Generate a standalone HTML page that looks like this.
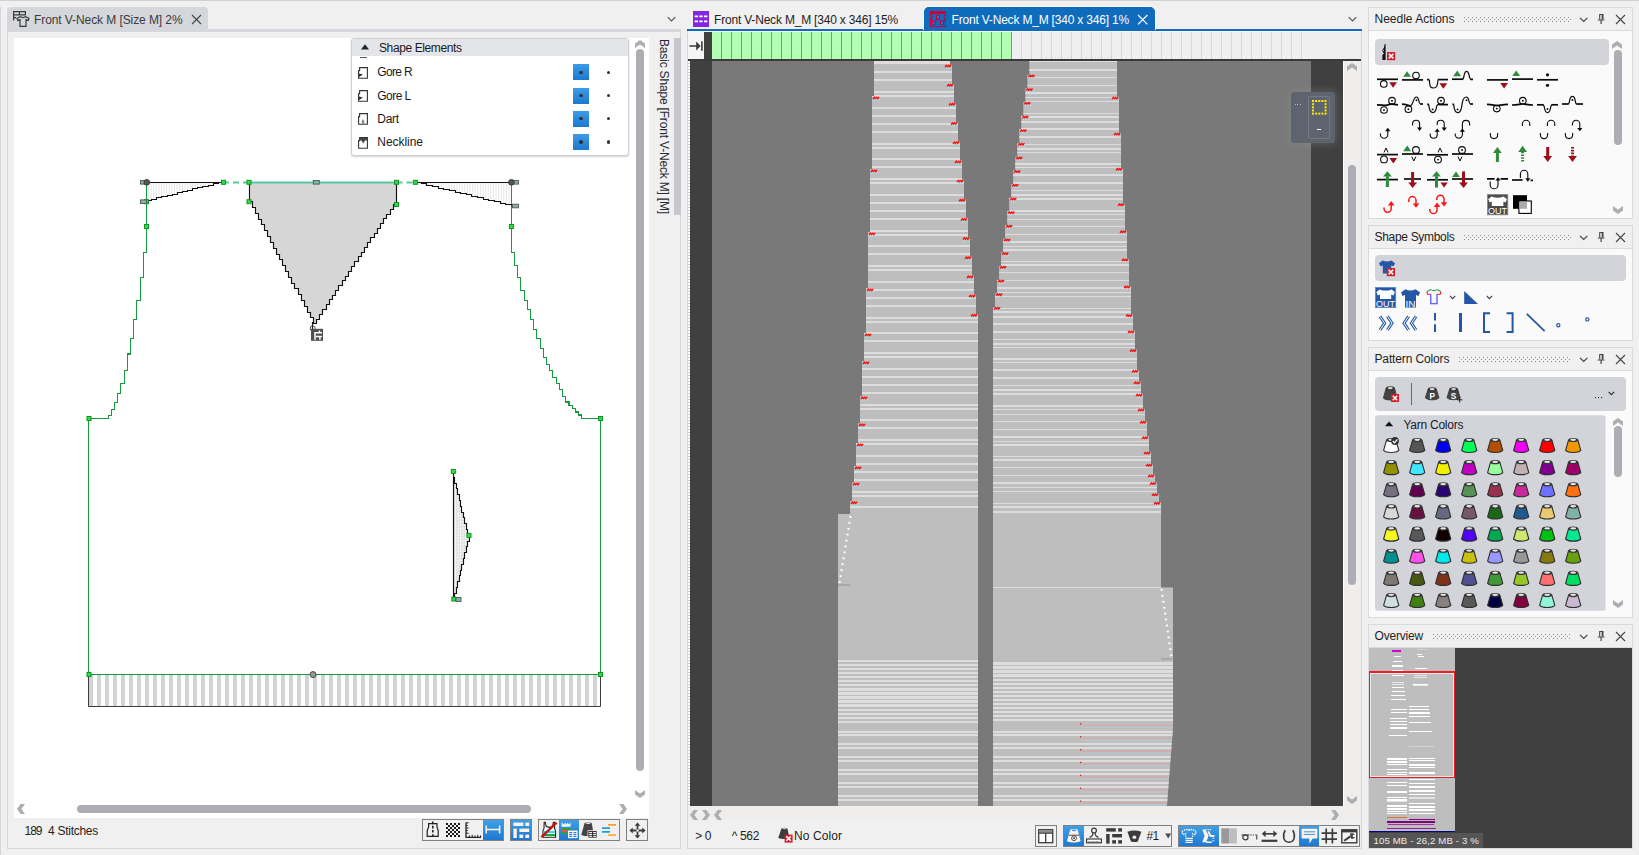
<!DOCTYPE html><html lang="en"><head><meta charset="utf-8"><title>Front V-Neck M</title><style>
html,body{margin:0;padding:0}
body{width:1639px;height:855px;position:relative;overflow:hidden;background:#f0f0f0;font-family:'Liberation Sans',sans-serif;font-size:12px;color:#1e1e1e}
div,svg{position:absolute;box-sizing:border-box}
.t{white-space:nowrap}
svg{overflow:visible}

</style></head><body>
<!-- s_frame -->
<div style="left:0px;top:0px;width:1639px;height:1px;background:#d0d0d0;"></div>
<div style="left:0px;top:7px;width:1px;height:848px;background:#d3d6db;"></div>
<!-- s_left -->
<div style="left:7px;top:7px;width:201px;height:25px;background:#d5d7dc;border-radius:4px 4px 0 0;"></div>
<div style="left:7px;top:29px;width:674px;height:3px;background:#d5d7dc;"></div>
<div style="left:7px;top:29px;width:1px;height:820px;background:#d5d7dc;"></div>
<div style="left:680px;top:29px;width:1px;height:820px;background:#d5d7dc;"></div>
<div style="left:7px;top:848px;width:674px;height:1px;background:#d5d7dc;"></div>
<svg style="left:13px;top:10px;" width="20" height="18"><g fill="none" stroke="#3a3a3a" stroke-width="1.2">
<path d="M0.6 10.5V1.6H12.4V4.8H0.6M6.5 1.6V4.8M0.6 7.6H3"/>
<path d="M4 8.2 L7.4 6.6 Q10 8.6 12.6 6.6 L16 8.2 L15.2 10.4 L13 9.6 V16.4 H7 V9.6 L4.8 10.4 Z" fill="#d5d7dc"/></g></svg>
<div class="t" style="left:34px;top:11.5px;height:16px;line-height:16px;font-size:12px;color:#3a3a3a;letter-spacing:-0.085px;">Front V-Neck M [Size M] 2%</div>
<svg style="left:191px;top:14px;" width="12" height="12"><path d="M1 1L10 10M10 1L1 10" stroke="#444" stroke-width="1.1" fill="none"/></svg>
<svg style="left:667px;top:16px;" width="10" height="8"><path d="M0.7 1.2L4.5 5L8.3 1.2" stroke="#555" stroke-width="1.1" fill="none"/></svg>
<div style="left:14px;top:38px;width:635px;height:780px;background:#ffffff;"></div>
<svg style="left:0px;top:0px;" width="700" height="855"><rect x="88.5" y="674.5" width="512" height="32" fill="#ffffff"/><rect x="89" y="675" width="4" height="31" fill="#d3d3d3"/><rect x="97" y="675" width="4" height="31" fill="#d3d3d3"/><rect x="105" y="675" width="4" height="31" fill="#d3d3d3"/><rect x="113" y="675" width="4" height="31" fill="#d3d3d3"/><rect x="121" y="675" width="4" height="31" fill="#d3d3d3"/><rect x="129" y="675" width="4" height="31" fill="#d3d3d3"/><rect x="137" y="675" width="4" height="31" fill="#d3d3d3"/><rect x="145" y="675" width="4" height="31" fill="#d3d3d3"/><rect x="153" y="675" width="4" height="31" fill="#d3d3d3"/><rect x="161" y="675" width="4" height="31" fill="#d3d3d3"/><rect x="169" y="675" width="4" height="31" fill="#d3d3d3"/><rect x="177" y="675" width="4" height="31" fill="#d3d3d3"/><rect x="185" y="675" width="4" height="31" fill="#d3d3d3"/><rect x="193" y="675" width="4" height="31" fill="#d3d3d3"/><rect x="201" y="675" width="4" height="31" fill="#d3d3d3"/><rect x="209" y="675" width="4" height="31" fill="#d3d3d3"/><rect x="217" y="675" width="4" height="31" fill="#d3d3d3"/><rect x="225" y="675" width="4" height="31" fill="#d3d3d3"/><rect x="233" y="675" width="4" height="31" fill="#d3d3d3"/><rect x="241" y="675" width="4" height="31" fill="#d3d3d3"/><rect x="249" y="675" width="4" height="31" fill="#d3d3d3"/><rect x="257" y="675" width="4" height="31" fill="#d3d3d3"/><rect x="265" y="675" width="4" height="31" fill="#d3d3d3"/><rect x="273" y="675" width="4" height="31" fill="#d3d3d3"/><rect x="281" y="675" width="4" height="31" fill="#d3d3d3"/><rect x="289" y="675" width="4" height="31" fill="#d3d3d3"/><rect x="297" y="675" width="4" height="31" fill="#d3d3d3"/><rect x="305" y="675" width="4" height="31" fill="#d3d3d3"/><rect x="313" y="675" width="4" height="31" fill="#d3d3d3"/><rect x="321" y="675" width="4" height="31" fill="#d3d3d3"/><rect x="329" y="675" width="4" height="31" fill="#d3d3d3"/><rect x="337" y="675" width="4" height="31" fill="#d3d3d3"/><rect x="345" y="675" width="4" height="31" fill="#d3d3d3"/><rect x="353" y="675" width="4" height="31" fill="#d3d3d3"/><rect x="361" y="675" width="4" height="31" fill="#d3d3d3"/><rect x="369" y="675" width="4" height="31" fill="#d3d3d3"/><rect x="377" y="675" width="4" height="31" fill="#d3d3d3"/><rect x="385" y="675" width="4" height="31" fill="#d3d3d3"/><rect x="393" y="675" width="4" height="31" fill="#d3d3d3"/><rect x="401" y="675" width="4" height="31" fill="#d3d3d3"/><rect x="409" y="675" width="4" height="31" fill="#d3d3d3"/><rect x="417" y="675" width="4" height="31" fill="#d3d3d3"/><rect x="425" y="675" width="4" height="31" fill="#d3d3d3"/><rect x="433" y="675" width="4" height="31" fill="#d3d3d3"/><rect x="441" y="675" width="4" height="31" fill="#d3d3d3"/><rect x="449" y="675" width="4" height="31" fill="#d3d3d3"/><rect x="457" y="675" width="4" height="31" fill="#d3d3d3"/><rect x="465" y="675" width="4" height="31" fill="#d3d3d3"/><rect x="473" y="675" width="4" height="31" fill="#d3d3d3"/><rect x="481" y="675" width="4" height="31" fill="#d3d3d3"/><rect x="489" y="675" width="4" height="31" fill="#d3d3d3"/><rect x="497" y="675" width="4" height="31" fill="#d3d3d3"/><rect x="505" y="675" width="4" height="31" fill="#d3d3d3"/><rect x="513" y="675" width="4" height="31" fill="#d3d3d3"/><rect x="521" y="675" width="4" height="31" fill="#d3d3d3"/><rect x="529" y="675" width="4" height="31" fill="#d3d3d3"/><rect x="537" y="675" width="4" height="31" fill="#d3d3d3"/><rect x="545" y="675" width="4" height="31" fill="#d3d3d3"/><rect x="553" y="675" width="4" height="31" fill="#d3d3d3"/><rect x="561" y="675" width="4" height="31" fill="#d3d3d3"/><rect x="569" y="675" width="4" height="31" fill="#d3d3d3"/><rect x="577" y="675" width="4" height="31" fill="#d3d3d3"/><rect x="585" y="675" width="4" height="31" fill="#d3d3d3"/><rect x="593" y="675" width="4" height="31" fill="#d3d3d3"/><path d="M88.5 674.5V706.5H600.5V674.5" fill="none" stroke="#3c3c3c" stroke-width="1"/><path d="M146.5 182V252.4H143.7V277.5H140.2V300.4H136.7V319.6H133.7V338.2H130.4V354.1H127.3V370.3H124.3V383.4H120.3V393.2H117.5V402.5H114.5V409.6H111.4V415.4H108.6V418.5H88.5V674.3" fill="none" stroke="#169a3e" stroke-width="1.3" shape-rendering="crispEdges"/><path d="M511.4 182V252.4H514.2V265.3H517.2V277.7H520.7V290.6H524.2V300.4H527.8V309.8H530.6V319.6H533.6V329.7H536.5V338.2H540.4V348.2H543.4V357.4H546.7V364.4H549.7V370.5H552.7V377.5H556.3V383.3H559.5V389.6H562.6V396.2H565.4V402H568.9V405.3H572.4V408.8H575.4V411.9H578.5V414.9H581.3V418.5H600.5V674.3" fill="none" stroke="#169a3e" stroke-width="1.3" shape-rendering="crispEdges"/><path d="M88.5 674.5H600.5" fill="none" stroke="#169a3e" stroke-width="1.3" shape-rendering="crispEdges"/><path d="M223 182.5H249M396.5 182.5H415.4" stroke="#58c79e" stroke-width="2.2" stroke-dasharray="6 4" fill="none"/><path d="M249.5 182.5V201.5H252.5V207.5H255.5V213.5H258.5V219.5H261.5V224.5H264.5V230.5H267.5V236.5H270.5V242.5H273.5V248.5H276.5V254.5H279.5V259.5H282.5V265.5H285.5V271.5H288.5V277.5H291.5V283.5H294.5V288.5H298.5V294.5H301.5V300.5H304.5V306.5H307.5V312.5H310.5V317.5H313.5V323.5H316.5V319.5H319.5V314.5H322.5V309.5H326.5V304.5H329.5V299.5H332.5V295.5H335.5V290.5H338.5V285.5H342.5V280.5H345.5V276.5H348.5V271.5H351.5V266.5H354.5V261.5H358.5V256.5H361.5V252.5H364.5V247.5H367.5V242.5H370.5V237.5H374.5V233.5H377.5V228.5H380.5V223.5H383.5V218.5H386.5V214.5H390.5V209.5H393.5V204.5H396.5V182.5Z" fill="#d6d6d6" stroke="none"/><path d="M249.5 182.5V201.5H252.5V207.5H255.5V213.5H258.5V219.5H261.5V224.5H264.5V230.5H267.5V236.5H270.5V242.5H273.5V248.5H276.5V254.5H279.5V259.5H282.5V265.5H285.5V271.5H288.5V277.5H291.5V283.5H294.5V288.5H298.5V294.5H301.5V300.5H304.5V306.5H307.5V312.5H310.5V317.5H313.5V323.5H316.5V319.5H319.5V314.5H322.5V309.5H326.5V304.5H329.5V299.5H332.5V295.5H335.5V290.5H338.5V285.5H342.5V280.5H345.5V276.5H348.5V271.5H351.5V266.5H354.5V261.5H358.5V256.5H361.5V252.5H364.5V247.5H367.5V242.5H370.5V237.5H374.5V233.5H377.5V228.5H380.5V223.5H383.5V218.5H386.5V214.5H390.5V209.5H393.5V204.5H396.5V182.5" fill="none" stroke="#111" stroke-width="1.15"/><path d="M249 182.5H396.5" stroke="#58c79e" stroke-width="2.2" fill="none"/><path d="M148.5 183V201.2M151.1 183V200.6M153.7 183V199.9M156.3 183V199.3M158.9 183V198.7M161.5 183V198.0M164.1 183V197.4M166.7 183V196.8M169.3 183V196.1M171.9 183V195.5M174.5 183V194.9M177.1 183V194.2M179.7 183V193.6M182.3 183V192.9M184.9 183V192.3M187.5 183V191.7M190.1 183V191.0M192.7 183V190.4M195.3 183V189.8M197.9 183V189.1M200.5 183V188.5M203.1 183V187.9M205.7 183V187.2M208.3 183V186.6M210.9 183V186.0M213.5 183V185.3M216.10000000000002 183V184.7M218.7 183V184.1M221.3 183V183.4" stroke="#e6e6e6" stroke-width="1" fill="none"/><path d="M418.0 183V183.6M420.6 183V184.2M423.2 183V184.9M425.8 183V185.5M428.4 183V186.1M431.0 183V186.7M433.6 183V187.4M436.2 183V188.0M438.8 183V188.6M441.4 183V189.2M444.0 183V189.9M446.6 183V190.5M449.2 183V191.1M451.8 183V191.7M454.4 183V192.3M457.0 183V193.0M459.6 183V193.6M462.2 183V194.2M464.8 183V194.8M467.4 183V195.5M470.0 183V196.1M472.6 183V196.7M475.2 183V197.3M477.8 183V198.0M480.4 183V198.6M483.0 183V199.2M485.6 183V199.8M488.2 183V200.4M490.8 183V201.1M493.4 183V201.7M496.0 183V202.3M498.6 183V202.9M501.2 183V203.6M503.8 183V204.2M506.4 183V204.8M509.0 183V205.4" stroke="#e6e6e6" stroke-width="1" fill="none"/><path d="M146.5 182.5H223.5H218.5V183.5H213.5V185.5H208.5V186.5H202.5V187.5H197.5V188.5H192.5V190.5H187.5V191.5H182.5V192.5H177.5V194.5H172.5V195.5H167.5V196.5H161.5V197.5H156.5V199.5H151.5V200.5H146.5V201.5" fill="none" stroke="#111" stroke-width="1.15"/><path d="M511.5 182.5H415.5H421.5V183.5H426.5V185.5H432.5V186.5H438.5V188.5H443.5V189.5H449.5V190.5H455.5V192.5H460.5V193.5H466.5V194.5H471.5V196.5H477.5V197.5H483.5V199.5H488.5V200.5H494.5V201.5H500.5V203.5H505.5V204.5H511.5V205.5" fill="none" stroke="#111" stroke-width="1.15"/><path d="M453.5 471.5V477.5H454.5V483.5H456.5V488.5H457.5V494.5H459.5V500.5H460.5V506.5H461.5V512.5H463.5V517.5H464.5V523.5H466.5V529.5H467.5V535.5H469.5V541.5H467.5V546.5H466.5V552.5H464.5V558.5H463.5V564.5H461.5V570.5H460.5V575.5H459.5V581.5H457.5V587.5H456.5V593.5H454.5V598.5H453.5Z" fill="#e2e2e2"/><path d="M455.5 485V588M458 496V578M460.5 508V566M463 518V554M465.5 527V545" stroke="#fff" stroke-width="0.9" stroke-dasharray="2 1.2" fill="none"/><path d="M453.5 471.5V477.5H454.5V483.5H456.5V488.5H457.5V494.5H459.5V500.5H460.5V506.5H461.5V512.5H463.5V517.5H464.5V523.5H466.5V529.5H467.5V535.5H469.5V541.5H467.5V546.5H466.5V552.5H464.5V558.5H463.5V564.5H461.5V570.5H460.5V575.5H459.5V581.5H457.5V587.5H456.5V593.5H454.5V598.5H453.5M453.5 471.5V599" fill="none" stroke="#111" stroke-width="1.15"/><path d="M312.5 322V329" stroke="#111" stroke-width="1.15" fill="none"/><circle cx="312.7" cy="328.3" r="2.5" fill="none" stroke="#4a4a4a" stroke-width="1"/><rect x="311" y="328.8" width="12" height="12" fill="#4f4f4f"/><path d="M315 332V339.8M314.2 332.8H322M319.5 330.4V332.6M316 336.6H322M319.9 337.2V339.8" stroke="#fff" stroke-width="1.5" fill="none"/><rect x="144.5" y="199.7" width="4" height="4" fill="#2fe03f" stroke="#12902a" stroke-width="1"/><rect x="144.5" y="224.5" width="4" height="4" fill="#2fe03f" stroke="#12902a" stroke-width="1"/><rect x="221.5" y="180.3" width="4" height="4" fill="#2fe03f" stroke="#12902a" stroke-width="1"/><rect x="247" y="180.3" width="4" height="4" fill="#2fe03f" stroke="#12902a" stroke-width="1"/><rect x="247" y="199.7" width="4" height="4" fill="#2fe03f" stroke="#12902a" stroke-width="1"/><rect x="394.5" y="180.3" width="4" height="4" fill="#2fe03f" stroke="#12902a" stroke-width="1"/><rect x="394.5" y="202.5" width="4" height="4" fill="#2fe03f" stroke="#12902a" stroke-width="1"/><rect x="413.4" y="180.3" width="4" height="4" fill="#2fe03f" stroke="#12902a" stroke-width="1"/><rect x="509.4" y="224.5" width="4" height="4" fill="#2fe03f" stroke="#12902a" stroke-width="1"/><rect x="87" y="416.5" width="4" height="4" fill="#2fe03f" stroke="#12902a" stroke-width="1"/><rect x="598.5" y="416.5" width="4" height="4" fill="#2fe03f" stroke="#12902a" stroke-width="1"/><rect x="87" y="672.5" width="4" height="4" fill="#2fe03f" stroke="#12902a" stroke-width="1"/><rect x="598.5" y="672.5" width="4" height="4" fill="#2fe03f" stroke="#12902a" stroke-width="1"/><rect x="451.3" y="469.4" width="4" height="4" fill="#2fe03f" stroke="#12902a" stroke-width="1"/><rect x="467" y="533.4" width="4" height="4" fill="#2fe03f" stroke="#12902a" stroke-width="1"/><rect x="451.8" y="597" width="4" height="4" fill="#2fe03f" stroke="#12902a" stroke-width="1"/><rect x="140.5" y="180.5" width="6" height="3.6" fill="#7fb5a4" stroke="#555" stroke-width="0.9"/><rect x="140.5" y="199.89999999999998" width="6" height="3.6" fill="#7fb5a4" stroke="#555" stroke-width="0.9"/><rect x="313.3" y="180.5" width="6" height="3.6" fill="#7fb5a4" stroke="#555" stroke-width="0.9"/><rect x="512.5" y="180.5" width="6" height="3.6" fill="#7fb5a4" stroke="#555" stroke-width="0.9"/><rect x="512.5" y="204.2" width="6" height="3.6" fill="#7fb5a4" stroke="#555" stroke-width="0.9"/><rect x="456" y="597.5" width="5" height="4" fill="#7fb5a4" stroke="#555" stroke-width="0.9"/><circle cx="146.8" cy="182.3" r="2.9" fill="#555" stroke="#333" stroke-width="0.8"/><circle cx="511.4" cy="182.3" r="2.9" fill="#555" stroke="#333" stroke-width="0.8"/><circle cx="313" cy="674.6" r="3" fill="#999" stroke="#444" stroke-width="1"/></svg>
<div style="left:351px;top:38px;width:278px;height:118px;background:#ffffff;border:1px solid #cfd0d4;border-radius:3px;box-shadow:0 1px 2px rgba(0,0,0,0.18);"></div>
<div style="left:352px;top:39px;width:276px;height:16.5px;background:#e4e5e8;border-radius:2px 2px 0 0;"></div>
<svg style="left:361px;top:43.5px;" width="9" height="6"><path d="M0 5.6L4 0.2L8 5.6Z" fill="#222"/></svg>
<div class="t" style="left:379px;top:39.5px;height:16px;line-height:16px;font-size:12px;color:#1a1a24;letter-spacing:-0.396px;">Shape Elements</div>
<div style="left:359.5px;top:56.5px;width:7px;height:1px;background:#555;"></div>
<svg style="left:358px;top:67.0px;" width="10" height="12"><path d="M1.6 0.6H9.4V11.2H0.6V3.6H1.6Z" fill="#fff" stroke="#333" stroke-width="1.1"/><path d="M1 6.4L5 7.6L1 10Z" fill="#333"/></svg>
<div class="t" style="left:377.3px;top:64.4px;height:16px;line-height:16px;font-size:12px;color:#1a1a24;letter-spacing:-0.663px;">Gore R</div>
<div style="left:573px;top:64.4px;width:16px;height:16px;background:linear-gradient(#3d9be6,#1d78cf);"><div style="left:6.3px;top:6.3px;width:3.4px;height:3.4px;border-radius:50%;background:#333"></div></div>
<div style="left:606.8px;top:70.7px;width:3.4px;height:3.4px;background:#333;border-radius:50%;"></div>
<svg style="left:358px;top:90.19999999999999px;" width="10" height="12"><path d="M1.6 0.6H9.4V11.2H0.6V3.6H1.6Z" fill="#fff" stroke="#333" stroke-width="1.1"/><path d="M1 6.4L5 7.6L1 10Z" fill="#333"/></svg>
<div class="t" style="left:377.3px;top:87.6px;height:16px;line-height:16px;font-size:12px;color:#1a1a24;letter-spacing:-0.547px;">Gore L</div>
<div style="left:573px;top:87.6px;width:16px;height:16px;background:linear-gradient(#3d9be6,#1d78cf);"><div style="left:6.3px;top:6.3px;width:3.4px;height:3.4px;border-radius:50%;background:#333"></div></div>
<div style="left:606.8px;top:93.89999999999999px;width:3.4px;height:3.4px;background:#333;border-radius:50%;"></div>
<svg style="left:358px;top:113.3px;" width="10" height="12"><path d="M1.6 0.6H9.4V11.2H0.6V3.6H1.6Z" fill="#fff" stroke="#333" stroke-width="1.1"/><path d="M3.8 10.8V8Q5 4.6 6.2 8V10.8Z" fill="#8a8a8a"/></svg>
<div class="t" style="left:377.3px;top:110.7px;height:16px;line-height:16px;font-size:12px;color:#1a1a24;letter-spacing:-0.267px;">Dart</div>
<div style="left:573px;top:110.7px;width:16px;height:16px;background:linear-gradient(#3d9be6,#1d78cf);"><div style="left:6.3px;top:6.3px;width:3.4px;height:3.4px;border-radius:50%;background:#333"></div></div>
<div style="left:606.8px;top:117.0px;width:3.4px;height:3.4px;background:#333;border-radius:50%;"></div>
<svg style="left:358px;top:136.5px;" width="10" height="12"><path d="M1.6 0.6H9.4V11.2H0.6V3.6H1.6Z" fill="#fff" stroke="#333" stroke-width="1.1"/><path d="M1.6 1H9V3.4L7 3.4L5.2 6.6L3.4 3.4H1.6Z" fill="#444"/></svg>
<div class="t" style="left:377.3px;top:133.9px;height:16px;line-height:16px;font-size:12px;color:#1a1a24;letter-spacing:-0.040px;">Neckline</div>
<div style="left:573px;top:133.9px;width:16px;height:16px;background:linear-gradient(#3d9be6,#1d78cf);"><div style="left:6.3px;top:6.3px;width:3.4px;height:3.4px;border-radius:50%;background:#333"></div></div>
<div style="left:606.8px;top:140.20000000000002px;width:3.4px;height:3.4px;background:#333;border-radius:50%;"></div>
<svg style="left:635px;top:40px;" width="10" height="8"><path d="M0 8L5 4.4L10 8V3.6L5 0L0 3.6Z" fill="#adaeb3"/></svg>
<svg style="left:635px;top:790px;" width="10" height="8"><path d="M0 0L5 3.6L10 0V4.4L5 8L0 4.4Z" fill="#adaeb3"/></svg>
<div style="left:636px;top:49px;width:8px;height:722px;background:#adaeb3;border-radius:4px;"></div>
<svg style="left:16.5px;top:804.3px;" width="8" height="10"><path d="M8 0L4.4 5L8 10H3.6L0 5L3.6 0Z" fill="#adaeb3"/></svg>
<svg style="left:619px;top:804.3px;" width="8" height="10"><path d="M0 0L3.6 5L0 10H4.4L8 5L4.4 0Z" fill="#adaeb3"/></svg>
<div style="left:77px;top:805px;width:454px;height:8px;background:#adaeb3;border-radius:4px;"></div>
<div style="left:674px;top:38px;width:6.5px;height:177px;background:#c6c7cc;"></div>
<div class="t" style="left:672px;top:38.5px;height:16px;line-height:16px;color:#2a2a34;font-size:12px;letter-spacing:-0.179px;transform-origin:0 0;transform:rotate(90deg)">Basic Shape [Front V-Neck M] [M]</div>
<div class="t" style="left:24.5px;top:822.8px;height:16px;line-height:16px;font-size:12px;color:#1e1e1e;letter-spacing:-1.006px;">189</div>
<div class="t" style="left:48px;top:822.8px;height:16px;line-height:16px;font-size:12px;color:#1e1e1e;letter-spacing:-0.269px;">4 Stitches</div>
<div style="left:422px;top:819px;width:82px;height:22px;background:#f0f0f0;border:1px solid #808080;"></div>
<div style="left:483px;top:820px;width:20px;height:20px;background:linear-gradient(#3f9fe8,#1f78d0);"></div>
<div style="left:510px;top:819px;width:22px;height:22px;background:#f0f0f0;border:1px solid #808080;"></div>
<div style="left:511px;top:820px;width:20px;height:20px;background:linear-gradient(#3f9fe8,#1f78d0);"></div>
<div style="left:538px;top:819px;width:82px;height:22px;background:#f0f0f0;border:1px solid #808080;"></div>
<div style="left:559px;top:820px;width:20px;height:20px;background:linear-gradient(#3f9fe8,#1f78d0);"></div>
<div style="left:626px;top:819px;width:22px;height:22px;background:#f0f0f0;border:1px solid #808080;"></div>
<svg style="left:426px;top:821px;" width="14" height="18"><path d="M2.6 2.6H11V6.2L12.2 9.4V15.4H1.2V9.4L2.6 6.2Z" fill="none" stroke="#222" stroke-width="1.2"/><path d="M6.8 0.6V17" stroke="#222" stroke-width="1.6" stroke-dasharray="2.6 1.6" fill="none"/></svg>
<svg style="left:446px;top:823px;shape-rendering:crispEdges;" width="14" height="14"><rect x="0" y="0" width="2" height="2" fill="#1a1a1a"/><rect x="0" y="4" width="2" height="2" fill="#1a1a1a"/><rect x="0" y="8" width="2" height="2" fill="#1a1a1a"/><rect x="0" y="12" width="2" height="2" fill="#1a1a1a"/><rect x="2" y="2" width="2" height="2" fill="#1a1a1a"/><rect x="2" y="6" width="2" height="2" fill="#1a1a1a"/><rect x="2" y="10" width="2" height="2" fill="#1a1a1a"/><rect x="4" y="0" width="2" height="2" fill="#1a1a1a"/><rect x="4" y="4" width="2" height="2" fill="#1a1a1a"/><rect x="4" y="8" width="2" height="2" fill="#1a1a1a"/><rect x="4" y="12" width="2" height="2" fill="#1a1a1a"/><rect x="6" y="2" width="2" height="2" fill="#1a1a1a"/><rect x="6" y="6" width="2" height="2" fill="#1a1a1a"/><rect x="6" y="10" width="2" height="2" fill="#1a1a1a"/><rect x="8" y="0" width="2" height="2" fill="#1a1a1a"/><rect x="8" y="4" width="2" height="2" fill="#1a1a1a"/><rect x="8" y="8" width="2" height="2" fill="#1a1a1a"/><rect x="8" y="12" width="2" height="2" fill="#1a1a1a"/><rect x="10" y="2" width="2" height="2" fill="#1a1a1a"/><rect x="10" y="6" width="2" height="2" fill="#1a1a1a"/><rect x="10" y="10" width="2" height="2" fill="#1a1a1a"/><rect x="12" y="0" width="2" height="2" fill="#1a1a1a"/><rect x="12" y="4" width="2" height="2" fill="#1a1a1a"/><rect x="12" y="8" width="2" height="2" fill="#1a1a1a"/><rect x="12" y="12" width="2" height="2" fill="#1a1a1a"/></svg>
<svg style="left:465px;top:822px;" width="17" height="17"><path d="M1 0.5V15.3H16" fill="none" stroke="#222" stroke-width="1.3"/><path d="M1 0.8H3.6M1 3.4H2.8M1 6H3.6M1 8.6H2.8M1 11.2H3.6M4.4 15.3V13.4M7.2 15.3V12.8M10 15.3V13.4M12.8 15.3V12.8M15.6 15.3V13.4" stroke="#222" stroke-width="1" fill="none"/></svg>
<svg style="left:485px;top:825px;" width="16" height="10"><path d="M1.2 0.4V8.6M14.6 0.4V8.6M1.2 4.5H14.6" stroke="#fdf3ea" stroke-width="1.5" fill="none"/></svg>
<svg style="left:512.5px;top:822px;" width="18" height="17"><g fill="#fdf3ea"><rect x="0.4" y="0.6" width="10" height="3.4"/><rect x="12.4" y="0.6" width="3.8" height="3.4"/><rect x="0.4" y="6.6" width="3.4" height="9.4"/><rect x="6.4" y="6.6" width="9.8" height="3.4"/><rect x="6.4" y="12.6" width="3.8" height="3.4"/><rect x="12.4" y="12.6" width="3.8" height="3.4"/></g></svg>
<svg style="left:540px;top:821px;" width="18" height="18"><path d="M5.2 1.2L6.2 5.6L9.4 6.4L12.4 5.6L13.4 1.2L14.4 1.2L14.6 7.4L15.6 10V16.2H3V10L4 7.4L4.2 1.2Z" fill="#fff" stroke="#222" stroke-width="1.1"/><rect x="3.6" y="10" width="11.4" height="2" fill="#16e8e8"/><rect x="3.6" y="13" width="11.4" height="2" fill="#1fa53a"/><path d="M1.4 16.2L16.6 1.6" stroke="#c4161c" stroke-width="2.4" fill="none"/></svg>
<svg style="left:560px;top:821px;" width="19" height="19"><path d="M1.6 1L3.4 3.4L5.4 1.8L6.4 3.6L7.6 1.8L9.4 3.4L10.6 1V5.8H1.6Z" fill="#fdf3ea"/><rect x="1.4" y="7" width="9.6" height="2" fill="#22a53c"/><rect x="1.4" y="9" width="6.4" height="2.2" fill="#f04a5e"/><rect x="1.4" y="11.2" width="6.4" height="2" fill="#22a53c"/><rect x="8" y="9.6" width="9.6" height="7.6" fill="#fff"/><path d="M9.2 11.6H12.2M13.4 11.6H16.4M9.2 13.5H12.2M13.4 13.5H16.4M9.2 15.4H12.2M13.4 15.4H16.4" stroke="#2a7fd6" stroke-width="1.1" fill="none"/></svg>
<svg style="left:580px;top:821px;" width="20" height="19"><path d="M4.6 2Q8.2 0.6 11.8 2L13.8 14.4Q7.4 16.4 1.2 14Z" fill="#444"/><ellipse cx="8.2" cy="2.3" rx="2.6" ry="0.8" fill="#eee"/><rect x="7.6" y="9.2" width="9.8" height="8.2" fill="#fff"/><rect x="8.3" y="9.9" width="8.4" height="6.8" fill="#333"/><path d="M9.2 11.5H12M13.2 11.5H16M9.2 13.4H12M13.2 13.4H16M9.2 15.3H12M13.2 15.3H16" stroke="#fff" stroke-width="1" fill="none"/></svg>
<svg style="left:601px;top:823px;" width="16" height="14"><path d="M7 1.8H15M7 12H15" stroke="#f7a21b" stroke-width="1.7" fill="none"/><path d="M1 5.2H9M1 8.8H9" stroke="#1e9ee0" stroke-width="1.7" fill="none"/></svg>
<svg style="left:628.5px;top:821.5px;" width="17" height="17"><path d="M8.5 0.4L11.4 3.8H9.4V7.6H13.2V5.6L16.6 8.5L13.2 11.4V9.4H9.4V13.2H11.4L8.5 16.6L5.6 13.2H7.6V9.4H3.8V11.4L0.4 8.5L3.8 5.6V7.6H7.6V3.8H5.6Z" fill="#3c3c3c"/><rect x="7.4" y="7.4" width="2.2" height="2.2" fill="#f0f0f0"/></svg>
<!-- s_mid -->
<div style="left:687px;top:29px;width:675px;height:2px;background:#0f6cbd;"></div>
<div style="left:924px;top:7px;width:231px;height:23px;background:#0f6cbd;border-radius:5px 5px 0 0;"></div>
<div style="left:687px;top:31px;width:1px;height:818px;background:#d5d7dc;"></div>
<div style="left:1361px;top:31px;width:1px;height:818px;background:#d5d7dc;"></div>
<div style="left:687px;top:848px;width:675px;height:1px;background:#d5d7dc;"></div>
<div style="left:688px;top:31px;width:673px;height:1px;background:#f6f6f6;"></div>
<div style="left:688px;top:31px;width:16px;height:28px;background:#f5f5f5;"></div>
<div style="left:704px;top:32px;width:8px;height:29px;background:#404040;"></div>
<div style="left:712px;top:32px;width:300px;height:27px;background:#b3ffb3;background-image:repeating-linear-gradient(90deg,transparent 0,transparent 9px,#12e612 9px,#12e612 10px);"></div>
<div style="left:1012px;top:32px;width:349px;height:27px;background:#efefef;"></div>
<div style="left:1012px;top:32px;width:290px;height:27px;background-image:repeating-linear-gradient(90deg,transparent 0,transparent 9px,#d6d6d6 9px,#d6d6d6 10px);"></div>
<div style="left:688px;top:59px;width:673px;height:2px;background:#3a3a3a;"></div>
<div style="left:688px;top:61px;width:2px;height:745px;background:#e8e8e8;"></div>
<div style="left:690px;top:61px;width:22px;height:745px;background:#404040;"></div>
<div style="left:712px;top:61px;width:599px;height:745px;background:#797979;"></div>
<div style="left:1311px;top:61px;width:32px;height:745px;background:#404040;"></div>
<div style="left:1343px;top:61px;width:18px;height:745px;background:#f0eded;border-left:1px solid #fff;"></div>
<div style="left:688px;top:806px;width:673px;height:16px;background:#f0eded;"></div>
<svg style="left:688px;top:61px;overflow:hidden;" width="673" height="745" viewBox="688 61 673 745"><defs><clipPath id="cl"><polygon points="874.0,61.0 874.0,96.0 872.0,96.0 872.0,169.0 870.0,169.0 870.0,232.0 868.0,232.0 868.0,288.0 866.0,288.0 866.0,333.0 864.0,333.0 864.0,361.0 862.0,361.0 862.0,396.0 860.0,396.0 860.0,423.0 858.0,423.0 858.0,443.0 856.0,443.0 856.0,466.0 854.0,466.0 854.0,482.2 852.0,482.2 852.0,500.9 850.0,500.9 850.0,514.0 838.0,514.0 838.0,806.0 978.0,806.0 978.0,314.0 976.0,314.0 976.0,294.8 974.0,294.8 974.0,275.6 972.0,275.6 972.0,256.5 970.0,256.5 970.0,237.3 968.0,237.3 968.0,218.1 966.0,218.1 966.0,198.9 964.0,198.9 964.0,179.8 962.0,179.8 962.0,160.6 960.0,160.6 960.0,141.4 958.0,141.4 958.0,122.2 956.0,122.2 956.0,103.0 954.0,103.0 954.0,83.9 952.0,83.9 952.0,64.7 950.0,64.7 950.0,61.0"/></clipPath><clipPath id="cr"><polygon points="1029.4,61.0 1029.4,74.7 1027.4,74.7 1027.4,88.3 1025.4,88.3 1025.4,102.0 1023.3,102.0 1023.3,115.7 1021.3,115.7 1021.3,129.3 1019.3,129.3 1019.3,143.0 1017.3,143.0 1017.3,156.7 1015.2,156.7 1015.2,170.3 1013.2,170.3 1013.2,184.0 1011.2,184.0 1011.2,197.7 1009.2,197.7 1009.2,211.3 1007.2,211.3 1007.2,225.0 1005.1,225.0 1005.1,238.7 1003.1,238.7 1003.1,252.3 1001.1,252.3 1001.1,266.0 999.1,266.0 999.1,279.7 997.0,279.7 997.0,293.3 995.0,293.3 995.0,307.0 993.0,307.0 993.0,806.0 1166.6,806.0 1167.0,804.9 1168.0,792.0 1169.0,779.1 1170.0,766.2 1171.0,753.3 1172.0,740.4 1173.0,727.5 1173.0,587.4 1161.0,587.4 1161.0,501.9 1159.0,501.9 1159.0,493.4 1157.0,493.4 1157.0,482.2 1155.0,482.2 1155.0,474.7 1153.0,474.7 1153.0,464.0 1151.0,464.0 1151.0,451.8 1149.0,451.8 1149.0,436.4 1147.0,436.4 1147.0,420.9 1145.0,420.9 1145.0,408.7 1143.0,408.7 1143.0,393.8 1141.0,393.8 1141.0,381.6 1139.0,381.6 1139.0,369.9 1137.0,369.9 1137.0,349.3 1135.0,349.3 1135.0,330.6 1133.0,330.6 1133.0,314.3 1131.0,314.3 1131.0,285.7 1129.0,285.7 1129.0,258.6 1127.0,258.6 1127.0,230.5 1125.0,230.5 1125.0,203.4 1123.0,203.4 1123.0,167.9 1121.0,167.9 1121.0,132.8 1119.0,132.8 1119.0,96.8 1117.0,96.8 1117.0,61.0"/></clipPath></defs><polygon points="874.0,61.0 874.0,96.0 872.0,96.0 872.0,169.0 870.0,169.0 870.0,232.0 868.0,232.0 868.0,288.0 866.0,288.0 866.0,333.0 864.0,333.0 864.0,361.0 862.0,361.0 862.0,396.0 860.0,396.0 860.0,423.0 858.0,423.0 858.0,443.0 856.0,443.0 856.0,466.0 854.0,466.0 854.0,482.2 852.0,482.2 852.0,500.9 850.0,500.9 850.0,514.0 838.0,514.0 838.0,806.0 978.0,806.0 978.0,314.0 976.0,314.0 976.0,294.8 974.0,294.8 974.0,275.6 972.0,275.6 972.0,256.5 970.0,256.5 970.0,237.3 968.0,237.3 968.0,218.1 966.0,218.1 966.0,198.9 964.0,198.9 964.0,179.8 962.0,179.8 962.0,160.6 960.0,160.6 960.0,141.4 958.0,141.4 958.0,122.2 956.0,122.2 956.0,103.0 954.0,103.0 954.0,83.9 952.0,83.9 952.0,64.7 950.0,64.7 950.0,61.0" fill="#bebebe"/><polygon points="1029.4,61.0 1029.4,74.7 1027.4,74.7 1027.4,88.3 1025.4,88.3 1025.4,102.0 1023.3,102.0 1023.3,115.7 1021.3,115.7 1021.3,129.3 1019.3,129.3 1019.3,143.0 1017.3,143.0 1017.3,156.7 1015.2,156.7 1015.2,170.3 1013.2,170.3 1013.2,184.0 1011.2,184.0 1011.2,197.7 1009.2,197.7 1009.2,211.3 1007.2,211.3 1007.2,225.0 1005.1,225.0 1005.1,238.7 1003.1,238.7 1003.1,252.3 1001.1,252.3 1001.1,266.0 999.1,266.0 999.1,279.7 997.0,279.7 997.0,293.3 995.0,293.3 995.0,307.0 993.0,307.0 993.0,806.0 1166.6,806.0 1167.0,804.9 1168.0,792.0 1169.0,779.1 1170.0,766.2 1171.0,753.3 1172.0,740.4 1173.0,727.5 1173.0,587.4 1161.0,587.4 1161.0,501.9 1159.0,501.9 1159.0,493.4 1157.0,493.4 1157.0,482.2 1155.0,482.2 1155.0,474.7 1153.0,474.7 1153.0,464.0 1151.0,464.0 1151.0,451.8 1149.0,451.8 1149.0,436.4 1147.0,436.4 1147.0,420.9 1145.0,420.9 1145.0,408.7 1143.0,408.7 1143.0,393.8 1141.0,393.8 1141.0,381.6 1139.0,381.6 1139.0,369.9 1137.0,369.9 1137.0,349.3 1135.0,349.3 1135.0,330.6 1133.0,330.6 1133.0,314.3 1131.0,314.3 1131.0,285.7 1129.0,285.7 1129.0,258.6 1127.0,258.6 1127.0,230.5 1125.0,230.5 1125.0,203.4 1123.0,203.4 1123.0,167.9 1121.0,167.9 1121.0,132.8 1119.0,132.8 1119.0,96.8 1117.0,96.8 1117.0,61.0" fill="#bebebe"/><g clip-path="url(#cl)" fill="#dddddd" shape-rendering="crispEdges"><rect x="830" y="61" width="160" height="3"/><rect x="830" y="71.0" width="155" height="1.8"/><rect x="830" y="79.0" width="155" height="1.8"/><rect x="830" y="91.0" width="155" height="1.8"/><rect x="830" y="95.0" width="155" height="1.8"/><rect x="830" y="107.0" width="155" height="1.8"/><rect x="830" y="115.0" width="155" height="1.8"/><rect x="830" y="123.0" width="155" height="1.8"/><rect x="830" y="131.0" width="155" height="1.8"/><rect x="830" y="143.0" width="155" height="1.8"/><rect x="830" y="147.0" width="155" height="1.8"/><rect x="830" y="158.0" width="155" height="1.8"/><rect x="830" y="166.0" width="155" height="1.8"/><rect x="830" y="178.0" width="155" height="1.8"/><rect x="830" y="182.0" width="155" height="1.8"/><rect x="830" y="194.0" width="155" height="1.8"/><rect x="830" y="202.0" width="155" height="1.8"/><rect x="830" y="210.0" width="155" height="1.8"/><rect x="830" y="218.0" width="155" height="1.8"/><rect x="830" y="230.0" width="155" height="1.8"/><rect x="830" y="234.0" width="155" height="1.8"/><rect x="830" y="245.0" width="155" height="1.8"/><rect x="830" y="253.0" width="155" height="1.8"/><rect x="830" y="265.0" width="155" height="1.8"/><rect x="830" y="269.0" width="155" height="1.8"/><rect x="830" y="281.0" width="155" height="1.8"/><rect x="830" y="289.0" width="155" height="1.8"/><rect x="830" y="297.0" width="155" height="1.8"/><rect x="830" y="305.0" width="155" height="1.8"/><rect x="830" y="317.0" width="155" height="1.8"/><rect x="830" y="321.0" width="155" height="1.8"/><rect x="830" y="332.0" width="155" height="1.8"/><rect x="830" y="340.0" width="155" height="1.8"/><rect x="830" y="352.0" width="155" height="1.8"/><rect x="830" y="356.0" width="155" height="1.8"/><rect x="830" y="368.0" width="155" height="1.8"/><rect x="830" y="376.0" width="155" height="1.8"/><rect x="830" y="384.0" width="155" height="1.8"/><rect x="830" y="392.0" width="155" height="1.8"/><rect x="830" y="404.0" width="155" height="1.8"/><rect x="830" y="408.0" width="155" height="1.8"/><rect x="830" y="419.0" width="155" height="1.8"/><rect x="830" y="427.0" width="155" height="1.8"/><rect x="830" y="439.0" width="155" height="1.8"/><rect x="830" y="443.0" width="155" height="1.8"/><rect x="830" y="455.0" width="155" height="1.8"/><rect x="830" y="463.0" width="155" height="1.8"/><rect x="830" y="471.0" width="155" height="1.8"/><rect x="830" y="479.0" width="155" height="1.8"/><rect x="830" y="491.0" width="155" height="1.8"/><rect x="830" y="495.0" width="155" height="1.8"/><rect x="830" y="506.0" width="155" height="1.8"/><rect x="830" y="660.0" width="155" height="2.2"/><rect x="830" y="664.0" width="155" height="2.2"/><rect x="830" y="668.1" width="155" height="2.2"/><rect x="830" y="672.1" width="155" height="2.2"/><rect x="830" y="676.2" width="155" height="2.2"/><rect x="830" y="680.2" width="155" height="2.2"/><rect x="830" y="684.2" width="155" height="2.2"/><rect x="830" y="688.3" width="155" height="2.2"/><rect x="830" y="692.3" width="155" height="2.2"/><rect x="830" y="696.4" width="155" height="2.2"/><rect x="830" y="700.4" width="155" height="2.2"/><rect x="830" y="704.4" width="155" height="2.2"/><rect x="830" y="708.5" width="155" height="2.2"/><rect x="830" y="712.5" width="155" height="2.2"/><rect x="830" y="716.6" width="155" height="2.2"/><rect x="830" y="720.6" width="155" height="2.2"/><rect x="830" y="730.5" width="155" height="2"/><rect x="830" y="734.4" width="155" height="2"/><rect x="830" y="743.4" width="155" height="2"/><rect x="830" y="747.3" width="155" height="2"/><rect x="830" y="756.3" width="155" height="2"/><rect x="830" y="760.2" width="155" height="2"/><rect x="830" y="769.2" width="155" height="2"/><rect x="830" y="773.1" width="155" height="2"/><rect x="830" y="782.1" width="155" height="2"/><rect x="830" y="786.0" width="155" height="2"/><rect x="830" y="795.0" width="155" height="2"/><rect x="830" y="798.9" width="155" height="2"/></g><g clip-path="url(#cr)" fill="#dddddd" shape-rendering="crispEdges"><rect x="990" y="61" width="190" height="1.4"/><rect x="990" y="69.0" width="190" height="1.8"/><rect x="990" y="76.5" width="190" height="1.8"/><rect x="990" y="84.5" width="190" height="1.8"/><rect x="990" y="92.0" width="190" height="1.8"/><rect x="990" y="96.5" width="190" height="1.8"/><rect x="990" y="100.5" width="190" height="1.8"/><rect x="990" y="112.5" width="190" height="1.8"/><rect x="990" y="116.0" width="190" height="1.8"/><rect x="990" y="121.0" width="190" height="1.8"/><rect x="990" y="128.0" width="190" height="1.8"/><rect x="990" y="136.0" width="190" height="1.8"/><rect x="990" y="143.5" width="190" height="1.8"/><rect x="990" y="148.0" width="190" height="1.8"/><rect x="990" y="151.5" width="190" height="1.8"/><rect x="990" y="163.0" width="190" height="1.8"/><rect x="990" y="166.5" width="190" height="1.8"/><rect x="990" y="174.0" width="190" height="1.8"/><rect x="990" y="182.0" width="190" height="1.8"/><rect x="990" y="189.5" width="190" height="1.8"/><rect x="990" y="194.0" width="190" height="1.8"/><rect x="990" y="198.0" width="190" height="1.8"/><rect x="990" y="210.0" width="190" height="1.8"/><rect x="990" y="213.5" width="190" height="1.8"/><rect x="990" y="218.5" width="190" height="1.8"/><rect x="990" y="225.5" width="190" height="1.8"/><rect x="990" y="233.5" width="190" height="1.8"/><rect x="990" y="241.0" width="190" height="1.8"/><rect x="990" y="245.5" width="190" height="1.8"/><rect x="990" y="249.0" width="190" height="1.8"/><rect x="990" y="260.5" width="190" height="1.8"/><rect x="990" y="264.0" width="190" height="1.8"/><rect x="990" y="271.5" width="190" height="1.8"/><rect x="990" y="279.5" width="190" height="1.8"/><rect x="990" y="287.0" width="190" height="1.8"/><rect x="990" y="291.5" width="190" height="1.8"/><rect x="990" y="295.5" width="190" height="1.8"/><rect x="990" y="307.5" width="190" height="1.8"/><rect x="990" y="311.0" width="190" height="1.8"/><rect x="990" y="316.0" width="190" height="1.8"/><rect x="990" y="323.0" width="190" height="1.8"/><rect x="990" y="331.0" width="190" height="1.8"/><rect x="990" y="338.5" width="190" height="1.8"/><rect x="990" y="343.0" width="190" height="1.8"/><rect x="990" y="346.5" width="190" height="1.8"/><rect x="990" y="358.0" width="190" height="1.8"/><rect x="990" y="361.5" width="190" height="1.8"/><rect x="990" y="369.0" width="190" height="1.8"/><rect x="990" y="377.0" width="190" height="1.8"/><rect x="990" y="384.5" width="190" height="1.8"/><rect x="990" y="389.0" width="190" height="1.8"/><rect x="990" y="393.0" width="190" height="1.8"/><rect x="990" y="405.0" width="190" height="1.8"/><rect x="990" y="408.5" width="190" height="1.8"/><rect x="990" y="413.5" width="190" height="1.8"/><rect x="990" y="420.5" width="190" height="1.8"/><rect x="990" y="428.5" width="190" height="1.8"/><rect x="990" y="436.0" width="190" height="1.8"/><rect x="990" y="440.5" width="190" height="1.8"/><rect x="990" y="444.0" width="190" height="1.8"/><rect x="990" y="455.5" width="190" height="1.8"/><rect x="990" y="459.0" width="190" height="1.8"/><rect x="990" y="466.5" width="190" height="1.8"/><rect x="990" y="474.5" width="190" height="1.8"/><rect x="990" y="482.0" width="190" height="1.8"/><rect x="990" y="486.5" width="190" height="1.8"/><rect x="990" y="490.5" width="190" height="1.8"/><rect x="990" y="502.5" width="190" height="1.8"/><rect x="990" y="506.0" width="190" height="1.8"/><rect x="990" y="511.0" width="190" height="1.8"/><rect x="990" y="586.5" width="172" height="1.5"/><rect x="990" y="662.3" width="190" height="2.2"/><rect x="990" y="666.3" width="190" height="2.2"/><rect x="990" y="670.4" width="190" height="2.2"/><rect x="990" y="674.4" width="190" height="2.2"/><rect x="990" y="678.5" width="190" height="2.2"/><rect x="990" y="682.5" width="190" height="2.2"/><rect x="990" y="686.5" width="190" height="2.2"/><rect x="990" y="690.6" width="190" height="2.2"/><rect x="990" y="694.6" width="190" height="2.2"/><rect x="990" y="698.7" width="190" height="2.2"/><rect x="990" y="702.7" width="190" height="2.2"/><rect x="990" y="706.7" width="190" height="2.2"/><rect x="990" y="710.8" width="190" height="2.2"/><rect x="990" y="714.8" width="190" height="2.2"/><rect x="990" y="718.9" width="190" height="2.2"/><rect x="990" y="730.5" width="190" height="2"/><rect x="990" y="734.4" width="190" height="2"/><rect x="990" y="743.4" width="190" height="2"/><rect x="990" y="747.3" width="190" height="2"/><rect x="990" y="756.3" width="190" height="2"/><rect x="990" y="760.2" width="190" height="2"/><rect x="990" y="769.2" width="190" height="2"/><rect x="990" y="773.1" width="190" height="2"/><rect x="990" y="782.1" width="190" height="2"/><rect x="990" y="786.0" width="190" height="2"/><rect x="990" y="795.0" width="190" height="2"/><rect x="990" y="798.9" width="190" height="2"/></g><path d="M873.0 99.0l1.3 -1.8l1.1 1.4l1.3 -1.4l1.1 1.4l1.3 -1.8" stroke="#a8dbe6" stroke-width="0.9" fill="none" transform="translate(0.8,2.2)"/><path d="M873.0 99.0l1.3 -1.8l1.1 1.4l1.3 -1.4l1.1 1.4l1.3 -1.8" stroke="#ff0a0a" stroke-width="1.3" fill="none"/><path d="M871.0 172.0l1.3 -1.8l1.1 1.4l1.3 -1.4l1.1 1.4l1.3 -1.8" stroke="#a8dbe6" stroke-width="0.9" fill="none" transform="translate(0.8,2.2)"/><path d="M871.0 172.0l1.3 -1.8l1.1 1.4l1.3 -1.4l1.1 1.4l1.3 -1.8" stroke="#ff0a0a" stroke-width="1.3" fill="none"/><path d="M869.0 235.0l1.3 -1.8l1.1 1.4l1.3 -1.4l1.1 1.4l1.3 -1.8" stroke="#a8dbe6" stroke-width="0.9" fill="none" transform="translate(0.8,2.2)"/><path d="M869.0 235.0l1.3 -1.8l1.1 1.4l1.3 -1.4l1.1 1.4l1.3 -1.8" stroke="#ff0a0a" stroke-width="1.3" fill="none"/><path d="M867.0 291.0l1.3 -1.8l1.1 1.4l1.3 -1.4l1.1 1.4l1.3 -1.8" stroke="#a8dbe6" stroke-width="0.9" fill="none" transform="translate(0.8,2.2)"/><path d="M867.0 291.0l1.3 -1.8l1.1 1.4l1.3 -1.4l1.1 1.4l1.3 -1.8" stroke="#ff0a0a" stroke-width="1.3" fill="none"/><path d="M865.0 336.0l1.3 -1.8l1.1 1.4l1.3 -1.4l1.1 1.4l1.3 -1.8" stroke="#a8dbe6" stroke-width="0.9" fill="none" transform="translate(0.8,2.2)"/><path d="M865.0 336.0l1.3 -1.8l1.1 1.4l1.3 -1.4l1.1 1.4l1.3 -1.8" stroke="#ff0a0a" stroke-width="1.3" fill="none"/><path d="M863.0 364.0l1.3 -1.8l1.1 1.4l1.3 -1.4l1.1 1.4l1.3 -1.8" stroke="#a8dbe6" stroke-width="0.9" fill="none" transform="translate(0.8,2.2)"/><path d="M863.0 364.0l1.3 -1.8l1.1 1.4l1.3 -1.4l1.1 1.4l1.3 -1.8" stroke="#ff0a0a" stroke-width="1.3" fill="none"/><path d="M861.0 399.0l1.3 -1.8l1.1 1.4l1.3 -1.4l1.1 1.4l1.3 -1.8" stroke="#a8dbe6" stroke-width="0.9" fill="none" transform="translate(0.8,2.2)"/><path d="M861.0 399.0l1.3 -1.8l1.1 1.4l1.3 -1.4l1.1 1.4l1.3 -1.8" stroke="#ff0a0a" stroke-width="1.3" fill="none"/><path d="M859.0 426.0l1.3 -1.8l1.1 1.4l1.3 -1.4l1.1 1.4l1.3 -1.8" stroke="#a8dbe6" stroke-width="0.9" fill="none" transform="translate(0.8,2.2)"/><path d="M859.0 426.0l1.3 -1.8l1.1 1.4l1.3 -1.4l1.1 1.4l1.3 -1.8" stroke="#ff0a0a" stroke-width="1.3" fill="none"/><path d="M857.0 446.0l1.3 -1.8l1.1 1.4l1.3 -1.4l1.1 1.4l1.3 -1.8" stroke="#a8dbe6" stroke-width="0.9" fill="none" transform="translate(0.8,2.2)"/><path d="M857.0 446.0l1.3 -1.8l1.1 1.4l1.3 -1.4l1.1 1.4l1.3 -1.8" stroke="#ff0a0a" stroke-width="1.3" fill="none"/><path d="M855.0 469.0l1.3 -1.8l1.1 1.4l1.3 -1.4l1.1 1.4l1.3 -1.8" stroke="#a8dbe6" stroke-width="0.9" fill="none" transform="translate(0.8,2.2)"/><path d="M855.0 469.0l1.3 -1.8l1.1 1.4l1.3 -1.4l1.1 1.4l1.3 -1.8" stroke="#ff0a0a" stroke-width="1.3" fill="none"/><path d="M853.0 485.2l1.3 -1.8l1.1 1.4l1.3 -1.4l1.1 1.4l1.3 -1.8" stroke="#a8dbe6" stroke-width="0.9" fill="none" transform="translate(0.8,2.2)"/><path d="M853.0 485.2l1.3 -1.8l1.1 1.4l1.3 -1.4l1.1 1.4l1.3 -1.8" stroke="#ff0a0a" stroke-width="1.3" fill="none"/><path d="M851.0 503.9l1.3 -1.8l1.1 1.4l1.3 -1.4l1.1 1.4l1.3 -1.8" stroke="#a8dbe6" stroke-width="0.9" fill="none" transform="translate(0.8,2.2)"/><path d="M851.0 503.9l1.3 -1.8l1.1 1.4l1.3 -1.4l1.1 1.4l1.3 -1.8" stroke="#ff0a0a" stroke-width="1.3" fill="none"/><path d="M945.0 67.1l1.3 -1.8l1.1 1.4l1.3 -1.4l1.1 1.4l1.3 -1.8" stroke="#a8dbe6" stroke-width="0.9" fill="none" transform="translate(0.8,2.2)"/><path d="M945.0 67.1l1.3 -1.8l1.1 1.4l1.3 -1.4l1.1 1.4l1.3 -1.8" stroke="#ff0a0a" stroke-width="1.3" fill="none"/><path d="M947.0 86.3l1.3 -1.8l1.1 1.4l1.3 -1.4l1.1 1.4l1.3 -1.8" stroke="#a8dbe6" stroke-width="0.9" fill="none" transform="translate(0.8,2.2)"/><path d="M947.0 86.3l1.3 -1.8l1.1 1.4l1.3 -1.4l1.1 1.4l1.3 -1.8" stroke="#ff0a0a" stroke-width="1.3" fill="none"/><path d="M949.0 105.4l1.3 -1.8l1.1 1.4l1.3 -1.4l1.1 1.4l1.3 -1.8" stroke="#a8dbe6" stroke-width="0.9" fill="none" transform="translate(0.8,2.2)"/><path d="M949.0 105.4l1.3 -1.8l1.1 1.4l1.3 -1.4l1.1 1.4l1.3 -1.8" stroke="#ff0a0a" stroke-width="1.3" fill="none"/><path d="M951.0 124.6l1.3 -1.8l1.1 1.4l1.3 -1.4l1.1 1.4l1.3 -1.8" stroke="#a8dbe6" stroke-width="0.9" fill="none" transform="translate(0.8,2.2)"/><path d="M951.0 124.6l1.3 -1.8l1.1 1.4l1.3 -1.4l1.1 1.4l1.3 -1.8" stroke="#ff0a0a" stroke-width="1.3" fill="none"/><path d="M953.0 143.8l1.3 -1.8l1.1 1.4l1.3 -1.4l1.1 1.4l1.3 -1.8" stroke="#a8dbe6" stroke-width="0.9" fill="none" transform="translate(0.8,2.2)"/><path d="M953.0 143.8l1.3 -1.8l1.1 1.4l1.3 -1.4l1.1 1.4l1.3 -1.8" stroke="#ff0a0a" stroke-width="1.3" fill="none"/><path d="M955.0 163.0l1.3 -1.8l1.1 1.4l1.3 -1.4l1.1 1.4l1.3 -1.8" stroke="#a8dbe6" stroke-width="0.9" fill="none" transform="translate(0.8,2.2)"/><path d="M955.0 163.0l1.3 -1.8l1.1 1.4l1.3 -1.4l1.1 1.4l1.3 -1.8" stroke="#ff0a0a" stroke-width="1.3" fill="none"/><path d="M957.0 182.2l1.3 -1.8l1.1 1.4l1.3 -1.4l1.1 1.4l1.3 -1.8" stroke="#a8dbe6" stroke-width="0.9" fill="none" transform="translate(0.8,2.2)"/><path d="M957.0 182.2l1.3 -1.8l1.1 1.4l1.3 -1.4l1.1 1.4l1.3 -1.8" stroke="#ff0a0a" stroke-width="1.3" fill="none"/><path d="M959.0 201.3l1.3 -1.8l1.1 1.4l1.3 -1.4l1.1 1.4l1.3 -1.8" stroke="#a8dbe6" stroke-width="0.9" fill="none" transform="translate(0.8,2.2)"/><path d="M959.0 201.3l1.3 -1.8l1.1 1.4l1.3 -1.4l1.1 1.4l1.3 -1.8" stroke="#ff0a0a" stroke-width="1.3" fill="none"/><path d="M961.0 220.5l1.3 -1.8l1.1 1.4l1.3 -1.4l1.1 1.4l1.3 -1.8" stroke="#a8dbe6" stroke-width="0.9" fill="none" transform="translate(0.8,2.2)"/><path d="M961.0 220.5l1.3 -1.8l1.1 1.4l1.3 -1.4l1.1 1.4l1.3 -1.8" stroke="#ff0a0a" stroke-width="1.3" fill="none"/><path d="M963.0 239.7l1.3 -1.8l1.1 1.4l1.3 -1.4l1.1 1.4l1.3 -1.8" stroke="#a8dbe6" stroke-width="0.9" fill="none" transform="translate(0.8,2.2)"/><path d="M963.0 239.7l1.3 -1.8l1.1 1.4l1.3 -1.4l1.1 1.4l1.3 -1.8" stroke="#ff0a0a" stroke-width="1.3" fill="none"/><path d="M965.0 258.9l1.3 -1.8l1.1 1.4l1.3 -1.4l1.1 1.4l1.3 -1.8" stroke="#a8dbe6" stroke-width="0.9" fill="none" transform="translate(0.8,2.2)"/><path d="M965.0 258.9l1.3 -1.8l1.1 1.4l1.3 -1.4l1.1 1.4l1.3 -1.8" stroke="#ff0a0a" stroke-width="1.3" fill="none"/><path d="M967.0 278.0l1.3 -1.8l1.1 1.4l1.3 -1.4l1.1 1.4l1.3 -1.8" stroke="#a8dbe6" stroke-width="0.9" fill="none" transform="translate(0.8,2.2)"/><path d="M967.0 278.0l1.3 -1.8l1.1 1.4l1.3 -1.4l1.1 1.4l1.3 -1.8" stroke="#ff0a0a" stroke-width="1.3" fill="none"/><path d="M969.0 297.2l1.3 -1.8l1.1 1.4l1.3 -1.4l1.1 1.4l1.3 -1.8" stroke="#a8dbe6" stroke-width="0.9" fill="none" transform="translate(0.8,2.2)"/><path d="M969.0 297.2l1.3 -1.8l1.1 1.4l1.3 -1.4l1.1 1.4l1.3 -1.8" stroke="#ff0a0a" stroke-width="1.3" fill="none"/><path d="M971.0 316.4l1.3 -1.8l1.1 1.4l1.3 -1.4l1.1 1.4l1.3 -1.8" stroke="#a8dbe6" stroke-width="0.9" fill="none" transform="translate(0.8,2.2)"/><path d="M971.0 316.4l1.3 -1.8l1.1 1.4l1.3 -1.4l1.1 1.4l1.3 -1.8" stroke="#ff0a0a" stroke-width="1.3" fill="none"/><path d="M1028.4 77.1l1.3 -1.8l1.1 1.4l1.3 -1.4l1.1 1.4l1.3 -1.8" stroke="#a8dbe6" stroke-width="0.9" fill="none" transform="translate(0.8,2.2)"/><path d="M1028.4 77.1l1.3 -1.8l1.1 1.4l1.3 -1.4l1.1 1.4l1.3 -1.8" stroke="#ff0a0a" stroke-width="1.3" fill="none"/><path d="M1026.4 90.7l1.3 -1.8l1.1 1.4l1.3 -1.4l1.1 1.4l1.3 -1.8" stroke="#a8dbe6" stroke-width="0.9" fill="none" transform="translate(0.8,2.2)"/><path d="M1026.4 90.7l1.3 -1.8l1.1 1.4l1.3 -1.4l1.1 1.4l1.3 -1.8" stroke="#ff0a0a" stroke-width="1.3" fill="none"/><path d="M1024.3 104.4l1.3 -1.8l1.1 1.4l1.3 -1.4l1.1 1.4l1.3 -1.8" stroke="#a8dbe6" stroke-width="0.9" fill="none" transform="translate(0.8,2.2)"/><path d="M1024.3 104.4l1.3 -1.8l1.1 1.4l1.3 -1.4l1.1 1.4l1.3 -1.8" stroke="#ff0a0a" stroke-width="1.3" fill="none"/><path d="M1022.3 118.1l1.3 -1.8l1.1 1.4l1.3 -1.4l1.1 1.4l1.3 -1.8" stroke="#a8dbe6" stroke-width="0.9" fill="none" transform="translate(0.8,2.2)"/><path d="M1022.3 118.1l1.3 -1.8l1.1 1.4l1.3 -1.4l1.1 1.4l1.3 -1.8" stroke="#ff0a0a" stroke-width="1.3" fill="none"/><path d="M1020.3 131.7l1.3 -1.8l1.1 1.4l1.3 -1.4l1.1 1.4l1.3 -1.8" stroke="#a8dbe6" stroke-width="0.9" fill="none" transform="translate(0.8,2.2)"/><path d="M1020.3 131.7l1.3 -1.8l1.1 1.4l1.3 -1.4l1.1 1.4l1.3 -1.8" stroke="#ff0a0a" stroke-width="1.3" fill="none"/><path d="M1018.3 145.4l1.3 -1.8l1.1 1.4l1.3 -1.4l1.1 1.4l1.3 -1.8" stroke="#a8dbe6" stroke-width="0.9" fill="none" transform="translate(0.8,2.2)"/><path d="M1018.3 145.4l1.3 -1.8l1.1 1.4l1.3 -1.4l1.1 1.4l1.3 -1.8" stroke="#ff0a0a" stroke-width="1.3" fill="none"/><path d="M1016.2 159.1l1.3 -1.8l1.1 1.4l1.3 -1.4l1.1 1.4l1.3 -1.8" stroke="#a8dbe6" stroke-width="0.9" fill="none" transform="translate(0.8,2.2)"/><path d="M1016.2 159.1l1.3 -1.8l1.1 1.4l1.3 -1.4l1.1 1.4l1.3 -1.8" stroke="#ff0a0a" stroke-width="1.3" fill="none"/><path d="M1014.2 172.7l1.3 -1.8l1.1 1.4l1.3 -1.4l1.1 1.4l1.3 -1.8" stroke="#a8dbe6" stroke-width="0.9" fill="none" transform="translate(0.8,2.2)"/><path d="M1014.2 172.7l1.3 -1.8l1.1 1.4l1.3 -1.4l1.1 1.4l1.3 -1.8" stroke="#ff0a0a" stroke-width="1.3" fill="none"/><path d="M1012.2 186.4l1.3 -1.8l1.1 1.4l1.3 -1.4l1.1 1.4l1.3 -1.8" stroke="#a8dbe6" stroke-width="0.9" fill="none" transform="translate(0.8,2.2)"/><path d="M1012.2 186.4l1.3 -1.8l1.1 1.4l1.3 -1.4l1.1 1.4l1.3 -1.8" stroke="#ff0a0a" stroke-width="1.3" fill="none"/><path d="M1010.2 200.1l1.3 -1.8l1.1 1.4l1.3 -1.4l1.1 1.4l1.3 -1.8" stroke="#a8dbe6" stroke-width="0.9" fill="none" transform="translate(0.8,2.2)"/><path d="M1010.2 200.1l1.3 -1.8l1.1 1.4l1.3 -1.4l1.1 1.4l1.3 -1.8" stroke="#ff0a0a" stroke-width="1.3" fill="none"/><path d="M1008.2 213.7l1.3 -1.8l1.1 1.4l1.3 -1.4l1.1 1.4l1.3 -1.8" stroke="#a8dbe6" stroke-width="0.9" fill="none" transform="translate(0.8,2.2)"/><path d="M1008.2 213.7l1.3 -1.8l1.1 1.4l1.3 -1.4l1.1 1.4l1.3 -1.8" stroke="#ff0a0a" stroke-width="1.3" fill="none"/><path d="M1006.1 227.4l1.3 -1.8l1.1 1.4l1.3 -1.4l1.1 1.4l1.3 -1.8" stroke="#a8dbe6" stroke-width="0.9" fill="none" transform="translate(0.8,2.2)"/><path d="M1006.1 227.4l1.3 -1.8l1.1 1.4l1.3 -1.4l1.1 1.4l1.3 -1.8" stroke="#ff0a0a" stroke-width="1.3" fill="none"/><path d="M1004.1 241.1l1.3 -1.8l1.1 1.4l1.3 -1.4l1.1 1.4l1.3 -1.8" stroke="#a8dbe6" stroke-width="0.9" fill="none" transform="translate(0.8,2.2)"/><path d="M1004.1 241.1l1.3 -1.8l1.1 1.4l1.3 -1.4l1.1 1.4l1.3 -1.8" stroke="#ff0a0a" stroke-width="1.3" fill="none"/><path d="M1002.1 254.7l1.3 -1.8l1.1 1.4l1.3 -1.4l1.1 1.4l1.3 -1.8" stroke="#a8dbe6" stroke-width="0.9" fill="none" transform="translate(0.8,2.2)"/><path d="M1002.1 254.7l1.3 -1.8l1.1 1.4l1.3 -1.4l1.1 1.4l1.3 -1.8" stroke="#ff0a0a" stroke-width="1.3" fill="none"/><path d="M1000.1 268.4l1.3 -1.8l1.1 1.4l1.3 -1.4l1.1 1.4l1.3 -1.8" stroke="#a8dbe6" stroke-width="0.9" fill="none" transform="translate(0.8,2.2)"/><path d="M1000.1 268.4l1.3 -1.8l1.1 1.4l1.3 -1.4l1.1 1.4l1.3 -1.8" stroke="#ff0a0a" stroke-width="1.3" fill="none"/><path d="M998.0 282.1l1.3 -1.8l1.1 1.4l1.3 -1.4l1.1 1.4l1.3 -1.8" stroke="#a8dbe6" stroke-width="0.9" fill="none" transform="translate(0.8,2.2)"/><path d="M998.0 282.1l1.3 -1.8l1.1 1.4l1.3 -1.4l1.1 1.4l1.3 -1.8" stroke="#ff0a0a" stroke-width="1.3" fill="none"/><path d="M996.0 295.7l1.3 -1.8l1.1 1.4l1.3 -1.4l1.1 1.4l1.3 -1.8" stroke="#a8dbe6" stroke-width="0.9" fill="none" transform="translate(0.8,2.2)"/><path d="M996.0 295.7l1.3 -1.8l1.1 1.4l1.3 -1.4l1.1 1.4l1.3 -1.8" stroke="#ff0a0a" stroke-width="1.3" fill="none"/><path d="M994.0 309.4l1.3 -1.8l1.1 1.4l1.3 -1.4l1.1 1.4l1.3 -1.8" stroke="#a8dbe6" stroke-width="0.9" fill="none" transform="translate(0.8,2.2)"/><path d="M994.0 309.4l1.3 -1.8l1.1 1.4l1.3 -1.4l1.1 1.4l1.3 -1.8" stroke="#ff0a0a" stroke-width="1.3" fill="none"/><path d="M1112.0 99.2l1.3 -1.8l1.1 1.4l1.3 -1.4l1.1 1.4l1.3 -1.8" stroke="#a8dbe6" stroke-width="0.9" fill="none" transform="translate(0.8,2.2)"/><path d="M1112.0 99.2l1.3 -1.8l1.1 1.4l1.3 -1.4l1.1 1.4l1.3 -1.8" stroke="#ff0a0a" stroke-width="1.3" fill="none"/><path d="M1114.0 135.2l1.3 -1.8l1.1 1.4l1.3 -1.4l1.1 1.4l1.3 -1.8" stroke="#a8dbe6" stroke-width="0.9" fill="none" transform="translate(0.8,2.2)"/><path d="M1114.0 135.2l1.3 -1.8l1.1 1.4l1.3 -1.4l1.1 1.4l1.3 -1.8" stroke="#ff0a0a" stroke-width="1.3" fill="none"/><path d="M1116.0 170.3l1.3 -1.8l1.1 1.4l1.3 -1.4l1.1 1.4l1.3 -1.8" stroke="#a8dbe6" stroke-width="0.9" fill="none" transform="translate(0.8,2.2)"/><path d="M1116.0 170.3l1.3 -1.8l1.1 1.4l1.3 -1.4l1.1 1.4l1.3 -1.8" stroke="#ff0a0a" stroke-width="1.3" fill="none"/><path d="M1118.0 205.8l1.3 -1.8l1.1 1.4l1.3 -1.4l1.1 1.4l1.3 -1.8" stroke="#a8dbe6" stroke-width="0.9" fill="none" transform="translate(0.8,2.2)"/><path d="M1118.0 205.8l1.3 -1.8l1.1 1.4l1.3 -1.4l1.1 1.4l1.3 -1.8" stroke="#ff0a0a" stroke-width="1.3" fill="none"/><path d="M1120.0 232.9l1.3 -1.8l1.1 1.4l1.3 -1.4l1.1 1.4l1.3 -1.8" stroke="#a8dbe6" stroke-width="0.9" fill="none" transform="translate(0.8,2.2)"/><path d="M1120.0 232.9l1.3 -1.8l1.1 1.4l1.3 -1.4l1.1 1.4l1.3 -1.8" stroke="#ff0a0a" stroke-width="1.3" fill="none"/><path d="M1122.0 261.0l1.3 -1.8l1.1 1.4l1.3 -1.4l1.1 1.4l1.3 -1.8" stroke="#a8dbe6" stroke-width="0.9" fill="none" transform="translate(0.8,2.2)"/><path d="M1122.0 261.0l1.3 -1.8l1.1 1.4l1.3 -1.4l1.1 1.4l1.3 -1.8" stroke="#ff0a0a" stroke-width="1.3" fill="none"/><path d="M1124.0 288.1l1.3 -1.8l1.1 1.4l1.3 -1.4l1.1 1.4l1.3 -1.8" stroke="#a8dbe6" stroke-width="0.9" fill="none" transform="translate(0.8,2.2)"/><path d="M1124.0 288.1l1.3 -1.8l1.1 1.4l1.3 -1.4l1.1 1.4l1.3 -1.8" stroke="#ff0a0a" stroke-width="1.3" fill="none"/><path d="M1126.0 316.7l1.3 -1.8l1.1 1.4l1.3 -1.4l1.1 1.4l1.3 -1.8" stroke="#a8dbe6" stroke-width="0.9" fill="none" transform="translate(0.8,2.2)"/><path d="M1126.0 316.7l1.3 -1.8l1.1 1.4l1.3 -1.4l1.1 1.4l1.3 -1.8" stroke="#ff0a0a" stroke-width="1.3" fill="none"/><path d="M1128.0 333.0l1.3 -1.8l1.1 1.4l1.3 -1.4l1.1 1.4l1.3 -1.8" stroke="#a8dbe6" stroke-width="0.9" fill="none" transform="translate(0.8,2.2)"/><path d="M1128.0 333.0l1.3 -1.8l1.1 1.4l1.3 -1.4l1.1 1.4l1.3 -1.8" stroke="#ff0a0a" stroke-width="1.3" fill="none"/><path d="M1130.0 351.7l1.3 -1.8l1.1 1.4l1.3 -1.4l1.1 1.4l1.3 -1.8" stroke="#a8dbe6" stroke-width="0.9" fill="none" transform="translate(0.8,2.2)"/><path d="M1130.0 351.7l1.3 -1.8l1.1 1.4l1.3 -1.4l1.1 1.4l1.3 -1.8" stroke="#ff0a0a" stroke-width="1.3" fill="none"/><path d="M1132.0 372.3l1.3 -1.8l1.1 1.4l1.3 -1.4l1.1 1.4l1.3 -1.8" stroke="#a8dbe6" stroke-width="0.9" fill="none" transform="translate(0.8,2.2)"/><path d="M1132.0 372.3l1.3 -1.8l1.1 1.4l1.3 -1.4l1.1 1.4l1.3 -1.8" stroke="#ff0a0a" stroke-width="1.3" fill="none"/><path d="M1134.0 384.0l1.3 -1.8l1.1 1.4l1.3 -1.4l1.1 1.4l1.3 -1.8" stroke="#a8dbe6" stroke-width="0.9" fill="none" transform="translate(0.8,2.2)"/><path d="M1134.0 384.0l1.3 -1.8l1.1 1.4l1.3 -1.4l1.1 1.4l1.3 -1.8" stroke="#ff0a0a" stroke-width="1.3" fill="none"/><path d="M1136.0 396.2l1.3 -1.8l1.1 1.4l1.3 -1.4l1.1 1.4l1.3 -1.8" stroke="#a8dbe6" stroke-width="0.9" fill="none" transform="translate(0.8,2.2)"/><path d="M1136.0 396.2l1.3 -1.8l1.1 1.4l1.3 -1.4l1.1 1.4l1.3 -1.8" stroke="#ff0a0a" stroke-width="1.3" fill="none"/><path d="M1138.0 411.1l1.3 -1.8l1.1 1.4l1.3 -1.4l1.1 1.4l1.3 -1.8" stroke="#a8dbe6" stroke-width="0.9" fill="none" transform="translate(0.8,2.2)"/><path d="M1138.0 411.1l1.3 -1.8l1.1 1.4l1.3 -1.4l1.1 1.4l1.3 -1.8" stroke="#ff0a0a" stroke-width="1.3" fill="none"/><path d="M1140.0 423.3l1.3 -1.8l1.1 1.4l1.3 -1.4l1.1 1.4l1.3 -1.8" stroke="#a8dbe6" stroke-width="0.9" fill="none" transform="translate(0.8,2.2)"/><path d="M1140.0 423.3l1.3 -1.8l1.1 1.4l1.3 -1.4l1.1 1.4l1.3 -1.8" stroke="#ff0a0a" stroke-width="1.3" fill="none"/><path d="M1142.0 438.8l1.3 -1.8l1.1 1.4l1.3 -1.4l1.1 1.4l1.3 -1.8" stroke="#a8dbe6" stroke-width="0.9" fill="none" transform="translate(0.8,2.2)"/><path d="M1142.0 438.8l1.3 -1.8l1.1 1.4l1.3 -1.4l1.1 1.4l1.3 -1.8" stroke="#ff0a0a" stroke-width="1.3" fill="none"/><path d="M1144.0 454.2l1.3 -1.8l1.1 1.4l1.3 -1.4l1.1 1.4l1.3 -1.8" stroke="#a8dbe6" stroke-width="0.9" fill="none" transform="translate(0.8,2.2)"/><path d="M1144.0 454.2l1.3 -1.8l1.1 1.4l1.3 -1.4l1.1 1.4l1.3 -1.8" stroke="#ff0a0a" stroke-width="1.3" fill="none"/><path d="M1146.0 466.4l1.3 -1.8l1.1 1.4l1.3 -1.4l1.1 1.4l1.3 -1.8" stroke="#a8dbe6" stroke-width="0.9" fill="none" transform="translate(0.8,2.2)"/><path d="M1146.0 466.4l1.3 -1.8l1.1 1.4l1.3 -1.4l1.1 1.4l1.3 -1.8" stroke="#ff0a0a" stroke-width="1.3" fill="none"/><path d="M1148.0 477.1l1.3 -1.8l1.1 1.4l1.3 -1.4l1.1 1.4l1.3 -1.8" stroke="#a8dbe6" stroke-width="0.9" fill="none" transform="translate(0.8,2.2)"/><path d="M1148.0 477.1l1.3 -1.8l1.1 1.4l1.3 -1.4l1.1 1.4l1.3 -1.8" stroke="#ff0a0a" stroke-width="1.3" fill="none"/><path d="M1150.0 484.6l1.3 -1.8l1.1 1.4l1.3 -1.4l1.1 1.4l1.3 -1.8" stroke="#a8dbe6" stroke-width="0.9" fill="none" transform="translate(0.8,2.2)"/><path d="M1150.0 484.6l1.3 -1.8l1.1 1.4l1.3 -1.4l1.1 1.4l1.3 -1.8" stroke="#ff0a0a" stroke-width="1.3" fill="none"/><path d="M1152.0 495.8l1.3 -1.8l1.1 1.4l1.3 -1.4l1.1 1.4l1.3 -1.8" stroke="#a8dbe6" stroke-width="0.9" fill="none" transform="translate(0.8,2.2)"/><path d="M1152.0 495.8l1.3 -1.8l1.1 1.4l1.3 -1.4l1.1 1.4l1.3 -1.8" stroke="#ff0a0a" stroke-width="1.3" fill="none"/><path d="M1154.0 504.3l1.3 -1.8l1.1 1.4l1.3 -1.4l1.1 1.4l1.3 -1.8" stroke="#a8dbe6" stroke-width="0.9" fill="none" transform="translate(0.8,2.2)"/><path d="M1154.0 504.3l1.3 -1.8l1.1 1.4l1.3 -1.4l1.1 1.4l1.3 -1.8" stroke="#ff0a0a" stroke-width="1.3" fill="none"/><path d="M850.5 516L839.5 583" stroke="#fff" stroke-width="2.2" stroke-dasharray="1.8 4.2" fill="none"/><path d="M1161.5 589L1171.5 657" stroke="#fff" stroke-width="2.2" stroke-dasharray="1.8 4.2" fill="none"/><path d="M838 585H850M1161 659H1172" stroke="#8a9a8a" stroke-width="1" fill="none"/><g clip-path="url(#cr)"><rect x="1080" y="723.2" width="1.3" height="1.3" fill="#f01010"/><rect x="1081.5" y="724.8000000000001" width="95" height="1.6" fill="#d4aaaa"/><path d="M1081.5 727.2H1176" stroke="#a6dbe6" stroke-width="1.1" stroke-dasharray="1 1" fill="none"/><rect x="1080" y="736.1" width="1.3" height="1.3" fill="#f01010"/><rect x="1081.5" y="737.7" width="95" height="1.6" fill="#d4aaaa"/><path d="M1081.5 740.1H1176" stroke="#a6dbe6" stroke-width="1.1" stroke-dasharray="1 1" fill="none"/><rect x="1080" y="749" width="1.3" height="1.3" fill="#f01010"/><rect x="1081.5" y="750.6" width="95" height="1.6" fill="#d4aaaa"/><path d="M1081.5 753H1176" stroke="#a6dbe6" stroke-width="1.1" stroke-dasharray="1 1" fill="none"/><rect x="1080" y="761.9" width="1.3" height="1.3" fill="#f01010"/><rect x="1081.5" y="763.5" width="95" height="1.6" fill="#d4aaaa"/><path d="M1081.5 765.9H1176" stroke="#a6dbe6" stroke-width="1.1" stroke-dasharray="1 1" fill="none"/><rect x="1080" y="774.8" width="1.3" height="1.3" fill="#f01010"/><rect x="1081.5" y="776.4" width="95" height="1.6" fill="#d4aaaa"/><path d="M1081.5 778.8H1176" stroke="#a6dbe6" stroke-width="1.1" stroke-dasharray="1 1" fill="none"/><rect x="1080" y="787.7" width="1.3" height="1.3" fill="#f01010"/><rect x="1081.5" y="789.3000000000001" width="95" height="1.6" fill="#d4aaaa"/><path d="M1081.5 791.7H1176" stroke="#a6dbe6" stroke-width="1.1" stroke-dasharray="1 1" fill="none"/><rect x="1080" y="800.6" width="1.3" height="1.3" fill="#f01010"/><rect x="1081.5" y="802.2" width="95" height="1.6" fill="#d4aaaa"/><path d="M1081.5 804.6H1176" stroke="#a6dbe6" stroke-width="1.1" stroke-dasharray="1 1" fill="none"/></g></svg>
<div style="left:688px;top:61px;width:2px;height:745px;background:#f4f4f4;background-image:repeating-linear-gradient(#fff 0,#fff 2px,#cfcfcf 2px,#cfcfcf 3px);"></div>
<svg style="left:693px;top:11px;" width="16" height="16"><rect width="16" height="16" fill="#8426e0"/><path d="M1.6 5.4H14.4M1.6 10.4H14.4" stroke="#fff" stroke-width="1.8" stroke-dasharray="3.4 1.3" fill="none"/></svg>
<div class="t" style="left:714px;top:11.5px;height:16px;line-height:16px;font-size:12px;color:#1e1e1e;letter-spacing:-0.190px;">Front V-Neck M_M [340 x 346] 15%</div>
<div style="left:923px;top:6px;width:233px;height:24px;border:1px solid #fbf4ef;border-bottom:none;border-radius:6px 6px 0 0;"></div>
<div style="left:924px;top:7px;width:231px;height:23px;background:#0f6cbd;border-radius:5px 5px 0 0;"></div>
<svg style="left:930px;top:11px;" width="16" height="16"><rect x="0.5" y="0.5" width="15" height="15" fill="none" stroke="#c8003c" stroke-width="1"/><rect x="0.5" y="0.5" width="15" height="2.6" fill="#c8003c"/><path d="M0.5 7.6L4 12L8 6.6L12 12L15.5 7.6" stroke="#c8003c" stroke-width="1.2" fill="none"/><g fill="#1580d8" stroke="#c8003c" stroke-width="1.1"><circle cx="8" cy="6" r="1.7"/><circle cx="4" cy="12" r="1.7"/><circle cx="12" cy="12" r="1.7"/><path d="M0.5 4.4A1.7 1.7 0 0 1 0.5 7.8M15.5 4.4A1.7 1.7 0 0 0 15.5 7.8"/></g></svg>
<div class="t" style="left:951.5px;top:11.5px;height:16px;line-height:16px;font-size:12px;color:#ffffff;letter-spacing:-0.190px;">Front V-Neck M_M [340 x 346] 1%</div>
<svg style="left:1137px;top:13.5px;" width="12" height="12"><path d="M1 1L10.4 10.4M10.4 1L1 10.4" stroke="#fff" stroke-width="1.2" fill="none"/></svg>
<svg style="left:1348px;top:16px;" width="10" height="8"><path d="M0.7 1.2L4.5 5L8.3 1.2" stroke="#555" stroke-width="1.1" fill="none"/></svg>
<svg style="left:689px;top:40px;" width="14" height="12"><path d="M0.4 6H9" stroke="#3a3a3a" stroke-width="1.5" fill="none"/><path d="M7.2 1.6L11.6 6L7.2 10.4Z" fill="#3a3a3a"/><path d="M12.9 1.2V10.8" stroke="#3a3a3a" stroke-width="1.6" fill="none"/></svg>
<div style="left:1291px;top:92px;width:44px;height:51px;background:#5d646e;border-radius:3px;box-shadow:0 0 7px 2px rgba(150,150,150,0.28);"></div>
<div style="left:1308px;top:96px;width:22px;height:43px;border:1px solid #747a83;border-radius:2px;"></div>
<svg style="left:1312px;top:99.6px;" width="15" height="15"><rect x="0.00" y="0.00" width="2" height="2" fill="#ffe600"/><rect x="0.00" y="3.15" width="2" height="2" fill="#ffe600"/><rect x="0.00" y="6.30" width="2" height="2" fill="#ffe600"/><rect x="0.00" y="9.45" width="2" height="2" fill="#ffe600"/><rect x="0.00" y="12.60" width="2" height="2" fill="#ffe600"/><rect x="3.15" y="0.00" width="2" height="2" fill="#ffe600"/><rect x="3.15" y="12.60" width="2" height="2" fill="#ffe600"/><rect x="6.30" y="0.00" width="2" height="2" fill="#ffe600"/><rect x="6.30" y="12.60" width="2" height="2" fill="#ffe600"/><rect x="9.45" y="0.00" width="2" height="2" fill="#ffe600"/><rect x="9.45" y="12.60" width="2" height="2" fill="#ffe600"/><rect x="12.60" y="0.00" width="2" height="2" fill="#ffe600"/><rect x="12.60" y="3.15" width="2" height="2" fill="#ffe600"/><rect x="12.60" y="6.30" width="2" height="2" fill="#ffe600"/><rect x="12.60" y="9.45" width="2" height="2" fill="#ffe600"/><rect x="12.60" y="12.60" width="2" height="2" fill="#ffe600"/></svg>
<div style="left:1317px;top:129px;width:4.4px;height:1.4px;background:#fff;"></div>
<div style="left:1295px;top:103.5px;width:1px;height:1px;background:#b9bdc3;"></div>
<div style="left:1297.3px;top:103.5px;width:1px;height:1px;background:#b9bdc3;"></div>
<div style="left:1299.6px;top:103.5px;width:1px;height:1px;background:#b9bdc3;"></div>
<svg style="left:1347px;top:63px;" width="10" height="8"><path d="M0 8L5 4.4L10 8V3.6L5 0L0 3.6Z" fill="#adaeb3"/></svg>
<svg style="left:1347px;top:796px;" width="10" height="8"><path d="M0 0L5 3.6L10 0V4.4L5 8L0 4.4Z" fill="#adaeb3"/></svg>
<div style="left:1348px;top:165px;width:8px;height:420px;background:#adaeb3;border-radius:4px;"></div>
<svg style="left:690px;top:810px;" width="8" height="10"><path d="M8 0L4.4 5L8 10H3.6L0 5L3.6 0Z" fill="#adaeb3"/></svg>
<svg style="left:702px;top:810px;" width="8" height="10"><path d="M0 0L3.6 5L0 10H4.4L8 5L4.4 0Z" fill="#adaeb3"/></svg>
<svg style="left:714px;top:810px;" width="8" height="10"><path d="M8 0L4.4 5L8 10H3.6L0 5L3.6 0Z" fill="#adaeb3"/></svg>
<svg style="left:1331px;top:810px;" width="8" height="10"><path d="M0 0L3.6 5L0 10H4.4L8 5L4.4 0Z" fill="#adaeb3"/></svg>
<div class="t" style="left:695.3px;top:828.0px;height:16px;line-height:16px;font-size:12px;color:#1e1e1e;letter-spacing:-0.439px;">&gt; 0</div>
<div class="t" style="left:731.8px;top:828.0px;height:16px;line-height:16px;font-size:12px;color:#1e1e1e;letter-spacing:-0.357px;">^ 562</div>
<div class="t" style="left:794px;top:827.5px;height:16px;line-height:16px;font-size:12px;color:#1e1e1e;letter-spacing:0.082px;">No Color</div>
<svg style="left:777px;top:827px;" width="18" height="17"><path d="M4.4 1.4Q7.4 0.2 10.4 1.4L12.4 11Q7 13.2 1.2 11Z" fill="#3c3c3c"/><ellipse cx="7.4" cy="1.6" rx="2.2" ry="0.7" fill="#ddd"/><rect x="7.6" y="7.6" width="8" height="8" fill="#d21f2b"/><path d="M9.4 9.4L13.8 13.8M13.8 9.4L9.4 13.8" stroke="#fff" stroke-width="1.5" fill="none"/></svg>
<div style="left:1035px;top:825px;width:22px;height:22px;background:#f0f0f0;border:1px solid #808080;"></div>
<div style="left:1063px;top:825px;width:109px;height:22px;background:#f0f0f0;border:1px solid #808080;"></div>
<div style="left:1064px;top:826px;width:20px;height:20px;background:linear-gradient(#3f9fe8,#1f78d0);"></div>
<div style="left:1178px;top:825px;width:182px;height:22px;background:#f0f0f0;border:1px solid #808080;"></div>
<div style="left:1179px;top:826px;width:40px;height:20px;background:linear-gradient(#3f9fe8,#1f78d0);"></div>
<div style="left:1299px;top:826px;width:20px;height:20px;background:linear-gradient(#3f9fe8,#1f78d0);"></div>
<svg style="left:1038px;top:829px;" width="16" height="15"><rect x="0.7" y="0.7" width="14" height="13" fill="#fff" stroke="#3c3c3c" stroke-width="1.3"/><rect x="1.2" y="1.2" width="13" height="2.6" fill="#8c8c8c"/><path d="M0.7 4.2H14.7M7.7 4.2V13.6" stroke="#3c3c3c" stroke-width="1.3" fill="none"/></svg>
<svg style="left:1066px;top:828px;" width="17" height="17"><path d="M4.4 1.6Q8 0.2 11.6 1.6L14.6 13.2Q8 16 0.8 13.2Z" fill="#fdf3ea"/><ellipse cx="8" cy="2.4" rx="2.2" ry="0.8" fill="#3d9be6"/><path d="M2.8 7.2H13" stroke="#3c3c3c" stroke-width="0.9" fill="none"/><circle cx="8" cy="10.2" r="2.4" fill="none" stroke="#3c3c3c" stroke-width="0.9"/><circle cx="8" cy="10.2" r="0.9" fill="#3c3c3c"/></svg>
<svg style="left:1085px;top:827px;" width="18" height="18"><circle cx="9" cy="3.6" r="2.4" fill="none" stroke="#3c3c3c" stroke-width="1.2"/><path d="M7.8 5.6Q8.4 8.8 4.6 10.4M10.2 5.6Q9.6 8.8 13.4 10.4" stroke="#3c3c3c" stroke-width="1.2" fill="none"/><rect x="1.6" y="12" width="14.8" height="3.8" fill="#fff" stroke="#3c3c3c" stroke-width="1.2"/><path d="M4 15.6V14M6 15.6V14.4M8 15.6V14M10 15.6V14.4M12 15.6V14M14 15.6V14.4" stroke="#3c3c3c" stroke-width="0.9" fill="none"/></svg>
<svg style="left:1106px;top:828px;" width="17" height="17"><g fill="#3c3c3c"><rect x="0.2" y="0.2" width="9.6" height="3.4"/><rect x="12.2" y="0.2" width="3.8" height="3.4"/><rect x="0.2" y="6" width="3.4" height="9.6"/><rect x="6.2" y="6" width="9.8" height="3.4"/><rect x="6.2" y="12.2" width="3.8" height="3.4"/><rect x="12.2" y="12.2" width="3.8" height="3.4"/></g></svg>
<svg style="left:1126.5px;top:829.5px;" width="15" height="13"><path d="M0.4 1.8Q7.4 -1 14.4 1.8L10.8 11.6Q7.4 12.6 4 11.6Z" fill="#3c3c3c"/><ellipse cx="7.4" cy="7.2" rx="1.9" ry="1.7" fill="#f4f4f4"/></svg>
<div class="t" style="left:1146.4px;top:828.0px;height:16px;line-height:16px;font-size:12px;color:#1e1e1e;letter-spacing:-0.673px;">#1</div>
<svg style="left:1164.5px;top:833px;" width="7" height="6"><path d="M0.2 0.4H6.2L3.2 5.4Z" fill="#4a4a4a"/></svg>
<svg style="left:1181px;top:828px;" width="17" height="17"><path d="M5 1.2Q8 2.8 11 1.2L15.4 3.6L14.2 6.6L11.6 5.6V9" stroke="#fdf3ea" stroke-width="1.3" stroke-dasharray="1.4 1" fill="none"/><path d="M11 1.2Q8 2.8 5 1.2L0.8 3.6L2 6.6L4.6 5.6V9" stroke="#fdf3ea" stroke-width="1.3" stroke-dasharray="1.4 1" fill="none"/><path d="M4.4 10.4H11.8M4.4 12.4H11.8M4.4 14.4H11.8" stroke="#fdf3ea" stroke-width="1.1" fill="none"/></svg>
<svg style="left:1200px;top:828px;" width="17" height="17"><path d="M2.2 1.6H5.4L8.6 7.8L6.2 14.2H2.2L4.6 7.8Z" fill="#fdf3ea"/><path d="M5.4 1.6H11.6" stroke="#fdf3ea" stroke-width="1.2" stroke-dasharray="1.2 1" fill="none"/><path d="M8.2 3.4L10.6 8H14.4" stroke="#fdf3ea" stroke-width="1.8" fill="none"/><path d="M6.2 14.2H11.8" stroke="#fdf3ea" stroke-width="1.6" fill="none"/><path d="M12.6 10.4H15M12.6 12.6H15" stroke="#fdf3ea" stroke-width="1.2" stroke-dasharray="1.2 1" fill="none"/></svg>
<svg style="left:1221px;top:828px;" width="16" height="16"><rect x="0.3" y="0.3" width="8" height="15.2" fill="#999"/><rect x="8.3" y="0.3" width="7.6" height="15.2" fill="#bdbdbd"/></svg>
<svg style="left:1241px;top:832px;" width="18" height="10"><ellipse cx="4.4" cy="5.4" rx="2.6" ry="2.4" fill="none" stroke="#3c3c3c" stroke-width="1.2"/><path d="M0.6 3H8.4" stroke="#3c3c3c" stroke-width="1.2" fill="none"/><path d="M9.4 3H15" stroke="#3c3c3c" stroke-width="1" stroke-dasharray="1.2 1.2" fill="none"/><path d="M15.8 2.6V7.6" stroke="#3c3c3c" stroke-width="1.1" fill="none"/></svg>
<svg style="left:1260.5px;top:829px;" width="17" height="14"><path d="M3.4 4.8H13.6" stroke="#3c3c3c" stroke-width="1.6" fill="none"/><path d="M0.8 4.8L4.6 1.4V8.2Z M16.2 4.8L12.4 1.4V8.2Z" fill="#3c3c3c"/><path d="M0.6 11.8H16.4" stroke="#3c3c3c" stroke-width="2.2" fill="none"/></svg>
<svg style="left:1282px;top:828.5px;" width="14" height="15"><path d="M3.2 1.2C0 7 1.6 13.2 7 13.2C12.4 13.2 14 7 10.8 1.2" fill="none" stroke="#3c3c3c" stroke-width="1.6"/></svg>
<svg style="left:1300.5px;top:828px;" width="17" height="17"><path d="M1.4 0.8H15.6Q16.4 0.8 16.4 1.6V9.8Q16.4 10.6 15.6 10.6H11.8L8.4 15.6V10.6H1.4Q0.6 10.6 0.6 9.8V1.6Q0.6 0.8 1.4 0.8Z" fill="#fdf3ea"/><path d="M2.8 3.8H14.2M2.8 6.4H14.2" stroke="#3d93e0" stroke-width="1" fill="none"/></svg>
<svg style="left:1321px;top:828px;" width="17" height="17"><path d="M5.2 0.6V15.6M11.4 0.6V15.6M0.6 5.2H16M0.6 11.2H16" stroke="#3c3c3c" stroke-width="1.7" fill="none"/></svg>
<svg style="left:1341px;top:828.5px;" width="17" height="15"><rect x="0.8" y="0.8" width="15" height="13" fill="#f4f4f4" stroke="#3c3c3c" stroke-width="1.4"/><rect x="0.8" y="0.8" width="15" height="2.6" fill="#3c3c3c"/><path d="M3.2 11.8L9.4 7.4" stroke="#3c3c3c" stroke-width="2" fill="none"/><path d="M9 4.6Q12 3.4 13.6 5.6L11.6 6.6L12 8.2L14.2 8Q13.2 10.4 10 9.4Z" fill="#3c3c3c"/></svg>
<!-- s_right -->
<div style="left:1368px;top:7px;width:265px;height:212px;background:#fafafa;border:1px solid #d9dadd;"></div>
<div style="left:1368px;top:7px;width:265px;height:24px;background:#f0f0f0;border:1px solid #d9dadd;"></div>
<div class="t" style="left:1374.5px;top:10.5px;height:16px;line-height:16px;font-size:12px;color:#1e1e1e;letter-spacing:-0.003px;">Needle Actions</div>
<svg style="left:1464px;top:17px;shape-rendering:crispEdges;" width="107" height="5"><defs><pattern id="gp7" width="4" height="4" patternUnits="userSpaceOnUse"><rect width="1" height="1" fill="#8c8c8c"/><rect x="2" y="2" width="1" height="1" fill="#8c8c8c"/><rect x="2" width="1" height="1" fill="#fbfbfb"/><rect y="2" width="1" height="1" fill="#fbfbfb"/></pattern></defs><rect width="107" height="5" fill="url(#gp7)"/></svg>
<svg style="left:1579px;top:16px;" width="10" height="8"><path d="M1 1.8L4.7 5.5L8.4 1.8" stroke="#444" stroke-width="1.2" fill="none"/></svg>
<svg style="left:1596px;top:13px;" width="10" height="14"><path d="M3.2 1.5H7.4M3.7 1.5V6.5" stroke="#444" stroke-width="1.1" fill="none"/><path d="M6.6 1.5V6.5" stroke="#444" stroke-width="1.8" fill="none"/><path d="M1.8 7H8.4M5.1 7V11" stroke="#444" stroke-width="1.2" fill="none"/></svg>
<svg style="left:1615px;top:14px;" width="12" height="12"><path d="M1 1L10 10M10 1L1 10" stroke="#444" stroke-width="1.1" fill="none"/></svg>
<div style="left:1368px;top:225px;width:265px;height:116px;background:#fafafa;border:1px solid #d9dadd;"></div>
<div style="left:1368px;top:225px;width:265px;height:24px;background:#f0f0f0;border:1px solid #d9dadd;"></div>
<div class="t" style="left:1374.5px;top:228.5px;height:16px;line-height:16px;font-size:12px;color:#1e1e1e;letter-spacing:-0.311px;">Shape Symbols</div>
<svg style="left:1464px;top:235px;shape-rendering:crispEdges;" width="107" height="5"><defs><pattern id="gp225" width="4" height="4" patternUnits="userSpaceOnUse"><rect width="1" height="1" fill="#8c8c8c"/><rect x="2" y="2" width="1" height="1" fill="#8c8c8c"/><rect x="2" width="1" height="1" fill="#fbfbfb"/><rect y="2" width="1" height="1" fill="#fbfbfb"/></pattern></defs><rect width="107" height="5" fill="url(#gp225)"/></svg>
<svg style="left:1579px;top:234px;" width="10" height="8"><path d="M1 1.8L4.7 5.5L8.4 1.8" stroke="#444" stroke-width="1.2" fill="none"/></svg>
<svg style="left:1596px;top:231px;" width="10" height="14"><path d="M3.2 1.5H7.4M3.7 1.5V6.5" stroke="#444" stroke-width="1.1" fill="none"/><path d="M6.6 1.5V6.5" stroke="#444" stroke-width="1.8" fill="none"/><path d="M1.8 7H8.4M5.1 7V11" stroke="#444" stroke-width="1.2" fill="none"/></svg>
<svg style="left:1615px;top:232px;" width="12" height="12"><path d="M1 1L10 10M10 1L1 10" stroke="#444" stroke-width="1.1" fill="none"/></svg>
<div style="left:1368px;top:347px;width:265px;height:271px;background:#fafafa;border:1px solid #d9dadd;"></div>
<div style="left:1368px;top:347px;width:265px;height:24px;background:#f0f0f0;border:1px solid #d9dadd;"></div>
<div class="t" style="left:1374.5px;top:350.5px;height:16px;line-height:16px;font-size:12px;color:#1e1e1e;letter-spacing:-0.135px;">Pattern Colors</div>
<svg style="left:1459px;top:357px;shape-rendering:crispEdges;" width="112" height="5"><defs><pattern id="gp347" width="4" height="4" patternUnits="userSpaceOnUse"><rect width="1" height="1" fill="#8c8c8c"/><rect x="2" y="2" width="1" height="1" fill="#8c8c8c"/><rect x="2" width="1" height="1" fill="#fbfbfb"/><rect y="2" width="1" height="1" fill="#fbfbfb"/></pattern></defs><rect width="112" height="5" fill="url(#gp347)"/></svg>
<svg style="left:1579px;top:356px;" width="10" height="8"><path d="M1 1.8L4.7 5.5L8.4 1.8" stroke="#444" stroke-width="1.2" fill="none"/></svg>
<svg style="left:1596px;top:353px;" width="10" height="14"><path d="M3.2 1.5H7.4M3.7 1.5V6.5" stroke="#444" stroke-width="1.1" fill="none"/><path d="M6.6 1.5V6.5" stroke="#444" stroke-width="1.8" fill="none"/><path d="M1.8 7H8.4M5.1 7V11" stroke="#444" stroke-width="1.2" fill="none"/></svg>
<svg style="left:1615px;top:354px;" width="12" height="12"><path d="M1 1L10 10M10 1L1 10" stroke="#444" stroke-width="1.1" fill="none"/></svg>
<div style="left:1368px;top:624px;width:265px;height:225px;background:#404040;border:1px solid #d9dadd;"></div>
<div style="left:1368px;top:624px;width:265px;height:24px;background:#f0f0f0;border:1px solid #d9dadd;"></div>
<div class="t" style="left:1374.5px;top:627.5px;height:16px;line-height:16px;font-size:12px;color:#1e1e1e;letter-spacing:-0.176px;">Overview</div>
<svg style="left:1433px;top:634px;shape-rendering:crispEdges;" width="138" height="5"><defs><pattern id="gp624" width="4" height="4" patternUnits="userSpaceOnUse"><rect width="1" height="1" fill="#8c8c8c"/><rect x="2" y="2" width="1" height="1" fill="#8c8c8c"/><rect x="2" width="1" height="1" fill="#fbfbfb"/><rect y="2" width="1" height="1" fill="#fbfbfb"/></pattern></defs><rect width="138" height="5" fill="url(#gp624)"/></svg>
<svg style="left:1579px;top:633px;" width="10" height="8"><path d="M1 1.8L4.7 5.5L8.4 1.8" stroke="#444" stroke-width="1.2" fill="none"/></svg>
<svg style="left:1596px;top:630px;" width="10" height="14"><path d="M3.2 1.5H7.4M3.7 1.5V6.5" stroke="#444" stroke-width="1.1" fill="none"/><path d="M6.6 1.5V6.5" stroke="#444" stroke-width="1.8" fill="none"/><path d="M1.8 7H8.4M5.1 7V11" stroke="#444" stroke-width="1.2" fill="none"/></svg>
<svg style="left:1615px;top:631px;" width="12" height="12"><path d="M1 1L10 10M10 1L1 10" stroke="#444" stroke-width="1.1" fill="none"/></svg>
<!-- s_right2 -->
<div style="left:1375px;top:39px;width:234px;height:26px;background:#d3d4d9;border-radius:4px;"></div>
<svg style="left:1381px;top:43px;" width="15" height="18"><path d="M1.4 17V12.6Q1.6 11 3 10.4V6.4Q2.6 4 3.8 1L4.6 1V17Z" fill="#111"/><path d="M3.2 5Q0.8 6.6 2.6 10" stroke="#111" stroke-width="1" fill="none"/><rect x="6" y="9" width="8.2" height="8.2" fill="#d21f2b"/><path d="M7.8 10.8L12.4 15.4M12.4 10.8L7.8 15.4" stroke="#fff" stroke-width="1.6" fill="none"/></svg>
<svg style="left:1368px;top:7px;" width="265" height="212" viewBox="1368 7 265 212"><path d="M1377 79.3H1398" stroke="#0a0a0a" stroke-width="1.7" fill="none"/><circle cx="1383.8" cy="83.9" r="3.3" fill="none" stroke="#0a0a0a" stroke-width="1.1"/><path d="M1389.2 82.2H1397.0L1393.1000000000001 87.8Z" fill="#9b0f1d"/><path d="M1402 79.9H1423" stroke="#0a0a0a" stroke-width="1.7" fill="none"/><path d="M1403.2 76.8L1407.1000000000001 71.2L1411.0 76.8Z" fill="#2e8b3a"/><circle cx="1416" cy="75.6" r="3.3" fill="none" stroke="#0a0a0a" stroke-width="1.1"/><path d="M1427 79.6H1429.2" stroke="#0a0a0a" stroke-width="1.7" fill="none" stroke-linecap="butt"/><path d="M1429.4 79.8C1429.6 87.8 1431 88 1433.6 88C1436.4 88 1437.4 86.6 1438 80.2" stroke="#0a0a0a" stroke-width="1.2" fill="none" stroke-linecap="butt"/><path d="M1437.6 79.6H1448" stroke="#0a0a0a" stroke-width="1.7" fill="none" stroke-linecap="butt"/><path d="M1439.4 83.2H1447.2L1443.3000000000002 88.8Z" fill="#9b0f1d"/><path d="M1453.3 76.19999999999999L1457.2 70.6L1461.1 76.19999999999999Z" fill="#2e8b3a"/><path d="M1452 79.2H1463" stroke="#0a0a0a" stroke-width="1.7" fill="none" stroke-linecap="butt"/><path d="M1462.4 79.4C1464.6 79 1463.4 71.4 1466.6 71.4C1470 71.4 1468.4 79 1471 79.4" stroke="#0a0a0a" stroke-width="1.2" fill="none" stroke-linecap="butt"/><path d="M1470.4 79.4H1473" stroke="#0a0a0a" stroke-width="1.7" fill="none" stroke-linecap="butt"/><path d="M1487 79.9H1508" stroke="#0a0a0a" stroke-width="1.7" fill="none"/><path d="M1500.2 83H1508.0L1504.1000000000001 88.6Z" fill="#9b0f1d"/><path d="M1512.3 76.0L1516.2 70.4L1520.1 76.0Z" fill="#2e8b3a"/><path d="M1512 79.1H1533" stroke="#0a0a0a" stroke-width="1.7" fill="none"/><path d="M1537 79.8H1558" stroke="#0a0a0a" stroke-width="1.7" fill="none"/><circle cx="1547.5" cy="74.8" r="1.6" fill="#0a0a0a"/><circle cx="1547.5" cy="85.3" r="1.6" fill="#0a0a0a"/><path d="M1377 104.8C1383 104.8 1386 106.4 1389 104.6C1392 103.2 1394 104.8 1398 104.8" stroke="#0a0a0a" stroke-width="1.7" fill="none" stroke-linecap="butt"/><circle cx="1392" cy="100.7" r="3.3" fill="none" stroke="#0a0a0a" stroke-width="1.1"/><circle cx="1392" cy="100.7" r="0.95" fill="#0a0a0a"/><circle cx="1384" cy="110" r="3.3" fill="none" stroke="#0a0a0a" stroke-width="1.1"/><circle cx="1384" cy="110" r="0.95" fill="#0a0a0a"/><path d="M1402 104.2C1406 104.2 1408 105 1410.6 106" stroke="#0a0a0a" stroke-width="1.7" fill="none" stroke-linecap="butt"/><circle cx="1408.4" cy="109.2" r="3.3" fill="none" stroke="#0a0a0a" stroke-width="1.1"/><circle cx="1408.4" cy="109.2" r="0.95" fill="#0a0a0a"/><path d="M1410.6 106C1413.6 103.6 1413.4 97 1416.4 97C1419.6 97 1418 103.4 1420.4 104" stroke="#0a0a0a" stroke-width="1.2" fill="none" stroke-linecap="butt"/><circle cx="1416.5" cy="100.2" r="0.95" fill="#0a0a0a"/><path d="M1420 104H1423" stroke="#0a0a0a" stroke-width="1.7" fill="none" stroke-linecap="butt"/><path d="M1427.2 104.4H1429" stroke="#0a0a0a" stroke-width="1.7" fill="none" stroke-linecap="butt"/><path d="M1428.8 104.6C1429.4 115 1436 115 1436.6 106.2C1437 104.6 1438.4 104.4 1439.6 104.4" stroke="#0a0a0a" stroke-width="1.2" fill="none" stroke-linecap="butt"/><circle cx="1432.6" cy="109.4" r="0.95" fill="#0a0a0a"/><circle cx="1441" cy="100.7" r="3.3" fill="none" stroke="#0a0a0a" stroke-width="1.1"/><circle cx="1441" cy="100.7" r="0.95" fill="#0a0a0a"/><path d="M1439 104.6H1448" stroke="#0a0a0a" stroke-width="1.7" fill="none" stroke-linecap="butt"/><path d="M1452.4 104.4H1454" stroke="#0a0a0a" stroke-width="1.7" fill="none" stroke-linecap="butt"/><path d="M1453.8 104.6C1454.4 115 1460.6 115 1461.6 107C1462.6 100 1463.4 97 1466.4 97C1469.6 97 1468 103.4 1470.4 104" stroke="#0a0a0a" stroke-width="1.2" fill="none" stroke-linecap="butt"/><circle cx="1457.6" cy="109.4" r="0.95" fill="#0a0a0a"/><circle cx="1466.5" cy="100.2" r="0.95" fill="#0a0a0a"/><path d="M1470 104H1473" stroke="#0a0a0a" stroke-width="1.7" fill="none" stroke-linecap="butt"/><path d="M1487 104.4C1493 104.4 1494 105.6 1497 105.6C1500 105.6 1502 104.4 1508 104.4" stroke="#0a0a0a" stroke-width="1.7" fill="none" stroke-linecap="butt"/><circle cx="1496.8" cy="108.6" r="3.3" fill="none" stroke="#0a0a0a" stroke-width="1.1"/><circle cx="1496.8" cy="108.6" r="0.95" fill="#0a0a0a"/><path d="M1512 105C1518 105 1519.6 104 1522.8 104C1526 104 1527.6 105 1533 105" stroke="#0a0a0a" stroke-width="1.7" fill="none" stroke-linecap="butt"/><circle cx="1522.8" cy="100.7" r="3.3" fill="none" stroke="#0a0a0a" stroke-width="1.1"/><circle cx="1522.8" cy="100.7" r="0.95" fill="#0a0a0a"/><path d="M1537 104.8H1543.4" stroke="#0a0a0a" stroke-width="1.7" fill="none" stroke-linecap="butt"/><path d="M1543 104.8C1545.4 105 1543.4 112.6 1547.5 112.6C1551.6 112.6 1549.6 105 1552 104.8" stroke="#0a0a0a" stroke-width="1.2" fill="none" stroke-linecap="butt"/><path d="M1551.6 104.8H1558" stroke="#0a0a0a" stroke-width="1.7" fill="none" stroke-linecap="butt"/><circle cx="1547.5" cy="109" r="0.95" fill="#0a0a0a"/><path d="M1562 104H1568.4" stroke="#0a0a0a" stroke-width="1.7" fill="none" stroke-linecap="butt"/><path d="M1568 104C1570.4 103.8 1568.6 96.4 1572.4 96.4C1576.2 96.4 1574.4 103.8 1576.8 104" stroke="#0a0a0a" stroke-width="1.2" fill="none" stroke-linecap="butt"/><path d="M1576.4 104H1583" stroke="#0a0a0a" stroke-width="1.7" fill="none" stroke-linecap="butt"/><circle cx="1572.4" cy="100" r="0.95" fill="#0a0a0a"/><path d="M1380.4 133.6V134.50000000000006A3.699999999999932 3.699999999999932 0 0 0 1387.8 134.50000000000006V129.8" stroke="#0a0a0a" stroke-width="1.1" fill="none" stroke-linecap="butt"/><path d="M1385.2 131.2L1387.8 127.8L1390.3999999999999 131.2Z" fill="#0a0a0a"/><path d="M1412.6 125.6V123.8A3.5 3.5 0 0 1 1419.6 123.8V129" stroke="#0a0a0a" stroke-width="1.1" fill="none" stroke-linecap="butt"/><path d="M1417.0 127.6L1419.6 131L1422.1999999999998 127.6Z" fill="#0a0a0a"/><path d="M1430.2 133.6V134.7A3.5 3.5 0 0 0 1437.2 134.7V130.4" stroke="#0a0a0a" stroke-width="1.1" fill="none" stroke-linecap="butt"/><path d="M1434.6000000000001 131.8L1437.2 128.4L1439.8 131.8Z" fill="#0a0a0a"/><path d="M1437.2 125V123.8A3.5 3.5 0 0 1 1444.2 123.8V129" stroke="#0a0a0a" stroke-width="1.1" fill="none" stroke-linecap="butt"/><path d="M1441.6000000000001 127.6L1444.2 131L1446.8 127.6Z" fill="#0a0a0a"/><path d="M1455.2 133.6V134.59999999999997A3.6000000000000227 3.6000000000000227 0 0 0 1462.4 134.59999999999997V130.4" stroke="#0a0a0a" stroke-width="1.1" fill="none" stroke-linecap="butt"/><path d="M1459.8000000000002 131.8L1462.4 128.4L1465.0 131.8Z" fill="#0a0a0a"/><path d="M1462.4 130V124A3.6 3.6 0 0 1 1469.6 124V125.6" stroke="#0a0a0a" stroke-width="1.1" fill="none" stroke-linecap="butt"/><path d="M1490.4 133V135.00000000000009A3.599999999999909 3.599999999999909 0 0 0 1497.6 135.00000000000009V133" stroke="#0a0a0a" stroke-width="1.1" fill="none" stroke-linecap="butt"/><path d="M1522.4 126V123.99999999999993A3.699999999999932 3.699999999999932 0 0 1 1529.8 123.99999999999993V126" stroke="#0a0a0a" stroke-width="1.1" fill="none" stroke-linecap="butt"/><path d="M1547.4 126V123.99999999999993A3.699999999999932 3.699999999999932 0 0 1 1554.8 123.99999999999993V126" stroke="#0a0a0a" stroke-width="1.1" fill="none" stroke-linecap="butt"/><path d="M1540.4 133V135.00000000000009A3.599999999999909 3.599999999999909 0 0 0 1547.6 135.00000000000009V133" stroke="#0a0a0a" stroke-width="1.1" fill="none" stroke-linecap="butt"/><path d="M1572.4 125.6V123.99999999999993A3.699999999999932 3.699999999999932 0 0 1 1579.8 123.99999999999993V129.3" stroke="#0a0a0a" stroke-width="1.1" fill="none" stroke-linecap="butt"/><path d="M1577.2 127.9L1579.8 131.3L1582.3999999999999 127.9Z" fill="#0a0a0a"/><path d="M1565.4 133V135.00000000000009A3.599999999999909 3.599999999999909 0 0 0 1572.6 135.00000000000009V133" stroke="#0a0a0a" stroke-width="1.1" fill="none" stroke-linecap="butt"/><path d="M1377 154.6H1398" stroke="#0a0a0a" stroke-width="1.7" fill="none"/><path d="M1384 152.4L1386 148L1388 152.4" stroke="#0a0a0a" stroke-width="1" fill="none" stroke-linecap="butt"/><circle cx="1384" cy="159.4" r="3.4" fill="none" stroke="#0a0a0a" stroke-width="1.1"/><path d="M1389.4 158H1397.2L1393.3000000000002 163.6Z" fill="#9b0f1d"/><path d="M1403.3 151.2L1407.2 145.6L1411.1 151.2Z" fill="#2e8b3a"/><circle cx="1416" cy="150" r="3.4" fill="none" stroke="#0a0a0a" stroke-width="1.1"/><path d="M1402 154H1423" stroke="#0a0a0a" stroke-width="1.7" fill="none"/><path d="M1411.8 156.6L1413.8 161L1415.8 156.6" stroke="#0a0a0a" stroke-width="1" fill="none" stroke-linecap="butt"/><path d="M1427 154.8H1448" stroke="#0a0a0a" stroke-width="1.7" fill="none"/><path d="M1438 152.4L1440 148L1442 152.4" stroke="#0a0a0a" stroke-width="1" fill="none" stroke-linecap="butt"/><circle cx="1438" cy="159.6" r="3.4" fill="none" stroke="#0a0a0a" stroke-width="1.1"/><circle cx="1438" cy="159.6" r="0.95" fill="#0a0a0a"/><path d="M1452 154H1473" stroke="#0a0a0a" stroke-width="1.7" fill="none"/><circle cx="1462" cy="150" r="3.4" fill="none" stroke="#0a0a0a" stroke-width="1.1"/><circle cx="1462" cy="150" r="0.95" fill="#0a0a0a"/><path d="M1458 156.6L1460 161L1462 156.6" stroke="#0a0a0a" stroke-width="1" fill="none" stroke-linecap="butt"/><path d="M1493.0 153L1497.4 147L1501.8000000000002 153Z" fill="#2e8b3a"/><path d="M1497.4 152.6V162" stroke="#2e8b3a" stroke-width="3" fill="none"/><path d="M1518.1999999999998 152L1522.6 145.8L1527.0 152Z" fill="#2e8b3a"/><path d="M1522.6 151.6V161.6" stroke="#2e8b3a" stroke-width="3" fill="none" stroke-dasharray="1.6 1.2"/><path d="M1543.3 156L1547.7 162L1552.1000000000001 156Z" fill="#9b0f1d"/><path d="M1547.7 147V156.4" stroke="#9b0f1d" stroke-width="3" fill="none"/><path d="M1568.1 156L1572.5 162L1576.9 156Z" fill="#9b0f1d"/><path d="M1572.5 147V156.4" stroke="#9b0f1d" stroke-width="3" fill="none" stroke-dasharray="1.6 1.2"/><path d="M1377 179.6H1398" stroke="#0a0a0a" stroke-width="1.7" fill="none"/><path d="M1383.0 176.6L1387.4 171.2L1391.8000000000002 176.6Z" fill="#2e8b3a"/><path d="M1387.4 176.2V187" stroke="#2e8b3a" stroke-width="3" fill="none"/><path d="M1404 179H1421" stroke="#0a0a0a" stroke-width="1.7" fill="none"/><path d="M1408.1999999999998 182.6L1412.6 188L1417.0 182.6Z" fill="#9b0f1d"/><path d="M1412.6 172V183.0" stroke="#9b0f1d" stroke-width="3" fill="none"/><path d="M1427 179.8H1448" stroke="#0a0a0a" stroke-width="1.7" fill="none"/><path d="M1432.1 176.6L1436.5 171.2L1440.9 176.6Z" fill="#2e8b3a"/><path d="M1436.5 176.2V187.6" stroke="#2e8b3a" stroke-width="3" fill="none"/><path d="M1440.4 182.4H1447.8000000000002L1444.1000000000001 187.6Z" fill="#9b0f1d"/><path d="M1452 179H1473" stroke="#0a0a0a" stroke-width="1.7" fill="none"/><path d="M1452.2 177.0L1456.0 171.6L1459.8 177.0Z" fill="#2e8b3a"/><path d="M1459.1 182.6L1463.5 188L1467.9 182.6Z" fill="#9b0f1d"/><path d="M1463.5 171.4V183.0" stroke="#9b0f1d" stroke-width="3" fill="none"/><path d="M1487 178.9H1494.6M1500.6 178.9H1508" stroke="#0a0a0a" stroke-width="1.7" fill="none" stroke-linecap="butt"/><path d="M1490.2 181.6V184.90000000000003A3.8999999999999773 3.8999999999999773 0 0 0 1498 184.90000000000003V179.2" stroke="#0a0a0a" stroke-width="1.1" fill="none" stroke-linecap="butt"/><path d="M1495.4 180.6L1498 177.2L1500.6 180.6Z" fill="#0a0a0a"/><path d="M1512 180H1522.6" stroke="#0a0a0a" stroke-width="1.7" fill="none" stroke-linecap="butt"/><path d="M1520.4 178V174A3.7 3.7 0 0 1 1527.8 174V178.6" stroke="#0a0a0a" stroke-width="1.1" fill="none" stroke-linecap="butt"/><path d="M1525.2 178.2L1527.8 181.8L1530.4 178.2Z" fill="#0a0a0a"/><path d="M1530.6 180.4H1533" stroke="#0a0a0a" stroke-width="1.7" fill="none" stroke-linecap="butt"/><path d="M1384 207.6V208.59999999999997A3.6000000000000227 3.6000000000000227 0 0 0 1391.2 208.59999999999997V203" stroke="#ff1414" stroke-width="1.5" fill="none" stroke-linecap="butt"/><path d="M1387.9 205.4L1391.2 201L1394.5 205.4Z" fill="#ff1414"/><path d="M1408.8 202V200.20000000000002A3.6000000000000227 3.6000000000000227 0 0 1 1416 200.20000000000002V205.8" stroke="#ff1414" stroke-width="1.5" fill="none" stroke-linecap="butt"/><path d="M1412.7 203.4L1416 207.8L1419.3 203.4Z" fill="#ff1414"/><path d="M1429.8 209V209.99999999999997A3.6000000000000227 3.6000000000000227 0 0 0 1437 209.99999999999997V204.6" stroke="#ff1414" stroke-width="1.5" fill="none" stroke-linecap="butt"/><path d="M1433.7 207.0L1437 202.6L1440.3 207.0Z" fill="#ff1414"/><path d="M1436.8 200V198.8A3.6000000000000227 3.6000000000000227 0 0 1 1444 198.8V204.6" stroke="#ff1414" stroke-width="1.5" fill="none" stroke-linecap="butt"/><path d="M1440.7 202.2L1444 206.6L1447.3 202.2Z" fill="#ff1414"/><rect x="1487.4" y="194.4" width="20.4" height="20.4" fill="#4d4d4d" stroke="#8a8a8a" stroke-width="0.8"/><path d="M1491.6 196.6Q1497.6 199 1503.6 196.6L1507 199.2L1505.4 202.6L1503.4 201.6V206H1491.8V201.6L1489.8 202.6L1488.2 199.2Z" fill="#fff"/><text x="1497.6" y="214" font-family="'Liberation Sans',sans-serif" font-size="8.6" fill="#fff" text-anchor="middle" textLength="19" lengthAdjust="spacingAndGlyphs">OUT</text><rect x="1513" y="195.2" width="14" height="13.6" fill="#000"/><rect x="1518.9" y="201" width="12.4" height="12.4" fill="#fff" stroke="#000" stroke-width="1.1"/><rect x="1519.5" y="201.6" width="7.5" height="7.2" fill="#ababab"/></svg>
<svg style="left:1612px;top:41px;" width="10" height="8"><path d="M0 8L5 4.4L10 8V3.6L5 0L0 3.6Z" fill="#adaeb3"/></svg>
<svg style="left:1613px;top:206px;" width="10" height="8"><path d="M0 0L5 3.6L10 0V4.4L5 8L0 4.4Z" fill="#adaeb3"/></svg>
<div style="left:1614px;top:50px;width:8px;height:95px;background:#adaeb3;border-radius:4px;"></div>
<!-- s_right3 -->
<div style="left:1375px;top:255px;width:251px;height:26px;background:#d3d4d9;border-radius:4px;"></div>
<svg style="left:1379px;top:260px;" width="18" height="17"><path d="M3.6 0.6Q8 2.6 12.4 0.6L16 3.2L14.6 6.2L12.2 5.4V13.6H3.8V5.4L1.4 6.2L0 3.2Z" fill="#2457a6"/><rect x="7.8" y="8" width="8.2" height="8.2" fill="#d21f2b"/><path d="M9.6 9.8L14.2 14.4M14.2 9.8L9.6 14.4" stroke="#fff" stroke-width="1.6" fill="none"/></svg>
<svg style="left:1368px;top:225px;" width="265" height="116" viewBox="1368 225 265 116"><rect x="1375.5" y="287.4" width="20.2" height="20.2" fill="#2457a6" stroke="#5f86c6" stroke-width="0.8"/><path d="M1379.6 289.4Q1385.6 291.8 1391.6 289.4L1394.8 292L1393.4 295.4L1391.2 294.4V299H1380V294.4L1377.8 295.4L1376.4 292Z" fill="#fff"/><text x="1385.6" y="306.8" font-family="'Liberation Sans',sans-serif" font-size="8.6" fill="#fff" text-anchor="middle" textLength="19" lengthAdjust="spacingAndGlyphs">OUT</text><path d="M1405.4 289.2Q1410.5 291.8 1415.6 289.2L1420 292.4L1418.4 296L1416 295V307.4H1405V295L1402.6 296L1401 292.4Z" fill="#2457a6"/><text x="1410.5" y="306.8" font-family="'Liberation Sans',sans-serif" font-size="8.4" fill="#fff" text-anchor="middle" textLength="10" lengthAdjust="spacingAndGlyphs">IN</text><path d="M1427 291.6L1430.6 289.6Q1433.8 291.6 1437 289.6L1440.8 291.6" stroke="#2ca04a" stroke-width="1.1" fill="none"/><path d="M1427 291.6L1427.4 294.2H1430.8M1440.8 291.6L1440.4 294.2H1437" stroke="#ee2222" stroke-width="1.1" fill="none"/><path d="M1430.8 294.2V303.8H1437V294.2" stroke="#3a3aff" stroke-width="1.1" fill="none"/><path d="M1450 296L1452.6 298.6L1455.2 296" stroke="#444" stroke-width="1.1" fill="none"/><path d="M1464.2 291V304H1478Z" fill="#2457a6"/><path d="M1486.8 296L1489.4 298.6L1492 296" stroke="#444" stroke-width="1.1" fill="none"/><path d="M1380 316.4L1384.6 323.2L1380 330M1387.4 316.4L1392 323.2L1387.4 330" stroke="#2457a6" stroke-width="3" fill="none" stroke-linejoin="miter"/><path d="M1380 316.4L1384.6 323.2L1380 330M1387.4 316.4L1392 323.2L1387.4 330" stroke="#fff" stroke-width="1" fill="none"/><path d="M1408.6 316.4L1404 323.2L1408.6 330M1416 316.4L1411.4 323.2L1416 330" stroke="#2457a6" stroke-width="3" fill="none" stroke-linejoin="miter"/><path d="M1408.6 316.4L1404 323.2L1408.6 330M1416 316.4L1411.4 323.2L1416 330" stroke="#fff" stroke-width="1" fill="none"/><path d="M1435 313V320.6M1435 324.2V332" stroke="#2457a6" stroke-width="2" fill="none"/><path d="M1460.5 313V332" stroke="#2457a6" stroke-width="3" fill="none"/><path d="M1490 313.2H1484V332H1490" stroke="#2457a6" stroke-width="2" fill="none"/><path d="M1506.6 313.2H1512.6V332H1506.6" stroke="#2457a6" stroke-width="2" fill="none"/><path d="M1526.8 313.8L1544.6 331.2" stroke="#2457a6" stroke-width="1.8" fill="none"/><circle cx="1558.3" cy="325.3" r="1.6" fill="#fff" stroke="#2457a6" stroke-width="1.2"/><circle cx="1587.3" cy="319.4" r="1.6" fill="#fff" stroke="#2457a6" stroke-width="1.2"/></svg>
<div style="left:1375px;top:377px;width:251px;height:34px;background:#d3d4d9;border-radius:4px;"></div>
<svg style="left:1368px;top:347px;" width="265" height="271" viewBox="1368 347 265 271"><path d="M1386.14 388.40L1383.50 397.90C1386.20 400.70 1394.40 400.70 1397.10 397.90L1394.46 388.40Z" fill="#444" stroke="#444" stroke-width="1.1" stroke-linejoin="round"/><ellipse cx="1390.30" cy="388.40" rx="4.46" ry="2.1" fill="#363636"/><ellipse cx="1390.30" cy="388.20" rx="2.46" ry="1.15" fill="#d8d8d8"/><rect x="1391" y="394" width="8" height="8" fill="#d21f2b"/><path d="M1392.8 395.8L1397.2 400.2M1397.2 395.8L1392.8 400.2" stroke="#fff" stroke-width="1.5" fill="none"/><path d="M1411.5 383V405" stroke="#6a6a6a" stroke-width="1" fill="none"/><path d="M1428.10 389.40L1425.50 397.70C1428.20 400.50 1436.20 400.50 1438.90 397.70L1436.30 389.40Z" fill="#444" stroke="#444" stroke-width="1.1" stroke-linejoin="round"/><ellipse cx="1432.20" cy="389.40" rx="4.40" ry="2.1" fill="#363636"/><ellipse cx="1432.20" cy="389.20" rx="2.40" ry="1.15" fill="#d8d8d8"/><text x="1432.3" y="399" font-family="'Liberation Sans',sans-serif" font-size="8.2" font-weight="bold" fill="#fff" text-anchor="middle">P</text><path d="M1449.61 389.40L1447.10 397.70C1449.80 400.50 1457.40 400.50 1460.10 397.70L1457.59 389.40Z" fill="#444" stroke="#444" stroke-width="1.1" stroke-linejoin="round"/><ellipse cx="1453.60" cy="389.40" rx="4.29" ry="2.1" fill="#363636"/><ellipse cx="1453.60" cy="389.20" rx="2.29" ry="1.15" fill="#d8d8d8"/><text x="1453.6" y="398.6" font-family="'Liberation Sans',sans-serif" font-size="8.2" font-weight="bold" fill="#fff" text-anchor="middle">S</text><path d="M1457 399.8H1462.4M1459.7 397.1V402.5" stroke="#222" stroke-width="1" fill="none"/><path d="M1608.6 391.8L1611.4 394.6L1614.2 391.8" stroke="#333" stroke-width="1.2" fill="none"/><rect x="1595" y="397" width="1.1" height="1.1" fill="#333"/><rect x="1598" y="397" width="1.1" height="1.1" fill="#333"/><rect x="1601" y="397" width="1.1" height="1.1" fill="#333"/><rect x="1375" y="415.3" width="230.6" height="195.4" rx="3" fill="#d3d4d9"/><path d="M1385 426.2L1389.1 421.4L1393.2 426.2Z" fill="#111"/><path d="M1386.58 440.00L1383.60 450.40C1386.30 453.20 1396.10 453.20 1398.80 450.40L1395.82 440.00Z" fill="#ffffff" stroke="#2e2e2e" stroke-width="1.1" stroke-linejoin="round"/><ellipse cx="1391.20" cy="440.00" rx="4.92" ry="2.1" fill="#363636"/><ellipse cx="1391.20" cy="439.80" rx="2.92" ry="1.15" fill="#e6e6e6"/><path d="M1412.58 440.00L1409.60 450.40C1412.30 453.20 1422.10 453.20 1424.80 450.40L1421.82 440.00Z" fill="#555555" stroke="#2e2e2e" stroke-width="1.1" stroke-linejoin="round"/><ellipse cx="1417.20" cy="440.00" rx="4.92" ry="2.1" fill="#363636"/><ellipse cx="1417.20" cy="439.80" rx="2.92" ry="1.15" fill="#e6e6e6"/><path d="M1438.58 440.00L1435.60 450.40C1438.30 453.20 1448.10 453.20 1450.80 450.40L1447.82 440.00Z" fill="#0000f0" stroke="#2e2e2e" stroke-width="1.1" stroke-linejoin="round"/><ellipse cx="1443.20" cy="440.00" rx="4.92" ry="2.1" fill="#363636"/><ellipse cx="1443.20" cy="439.80" rx="2.92" ry="1.15" fill="#e6e6e6"/><path d="M1464.58 440.00L1461.60 450.40C1464.30 453.20 1474.10 453.20 1476.80 450.40L1473.82 440.00Z" fill="#00ff55" stroke="#2e2e2e" stroke-width="1.1" stroke-linejoin="round"/><ellipse cx="1469.20" cy="440.00" rx="4.92" ry="2.1" fill="#363636"/><ellipse cx="1469.20" cy="439.80" rx="2.92" ry="1.15" fill="#e6e6e6"/><path d="M1490.58 440.00L1487.60 450.40C1490.30 453.20 1500.10 453.20 1502.80 450.40L1499.82 440.00Z" fill="#b05000" stroke="#2e2e2e" stroke-width="1.1" stroke-linejoin="round"/><ellipse cx="1495.20" cy="440.00" rx="4.92" ry="2.1" fill="#363636"/><ellipse cx="1495.20" cy="439.80" rx="2.92" ry="1.15" fill="#e6e6e6"/><path d="M1516.58 440.00L1513.60 450.40C1516.30 453.20 1526.10 453.20 1528.80 450.40L1525.82 440.00Z" fill="#f000f0" stroke="#2e2e2e" stroke-width="1.1" stroke-linejoin="round"/><ellipse cx="1521.20" cy="440.00" rx="4.92" ry="2.1" fill="#363636"/><ellipse cx="1521.20" cy="439.80" rx="2.92" ry="1.15" fill="#e6e6e6"/><path d="M1542.58 440.00L1539.60 450.40C1542.30 453.20 1552.10 453.20 1554.80 450.40L1551.82 440.00Z" fill="#ff0000" stroke="#2e2e2e" stroke-width="1.1" stroke-linejoin="round"/><ellipse cx="1547.20" cy="440.00" rx="4.92" ry="2.1" fill="#363636"/><ellipse cx="1547.20" cy="439.80" rx="2.92" ry="1.15" fill="#e6e6e6"/><path d="M1568.58 440.00L1565.60 450.40C1568.30 453.20 1578.10 453.20 1580.80 450.40L1577.82 440.00Z" fill="#f09800" stroke="#2e2e2e" stroke-width="1.1" stroke-linejoin="round"/><ellipse cx="1573.20" cy="440.00" rx="4.92" ry="2.1" fill="#363636"/><ellipse cx="1573.20" cy="439.80" rx="2.92" ry="1.15" fill="#e6e6e6"/><path d="M1386.58 462.15L1383.60 472.55C1386.30 475.35 1396.10 475.35 1398.80 472.55L1395.82 462.15Z" fill="#909000" stroke="#2e2e2e" stroke-width="1.1" stroke-linejoin="round"/><ellipse cx="1391.20" cy="462.15" rx="4.92" ry="2.1" fill="#363636"/><ellipse cx="1391.20" cy="461.95" rx="2.92" ry="1.15" fill="#e6e6e6"/><path d="M1412.58 462.15L1409.60 472.55C1412.30 475.35 1422.10 475.35 1424.80 472.55L1421.82 462.15Z" fill="#40e8ff" stroke="#2e2e2e" stroke-width="1.1" stroke-linejoin="round"/><ellipse cx="1417.20" cy="462.15" rx="4.92" ry="2.1" fill="#363636"/><ellipse cx="1417.20" cy="461.95" rx="2.92" ry="1.15" fill="#e6e6e6"/><path d="M1438.58 462.15L1435.60 472.55C1438.30 475.35 1448.10 475.35 1450.80 472.55L1447.82 462.15Z" fill="#f0f000" stroke="#2e2e2e" stroke-width="1.1" stroke-linejoin="round"/><ellipse cx="1443.20" cy="462.15" rx="4.92" ry="2.1" fill="#363636"/><ellipse cx="1443.20" cy="461.95" rx="2.92" ry="1.15" fill="#e6e6e6"/><path d="M1464.58 462.15L1461.60 472.55C1464.30 475.35 1474.10 475.35 1476.80 472.55L1473.82 462.15Z" fill="#c000c0" stroke="#2e2e2e" stroke-width="1.1" stroke-linejoin="round"/><ellipse cx="1469.20" cy="462.15" rx="4.92" ry="2.1" fill="#363636"/><ellipse cx="1469.20" cy="461.95" rx="2.92" ry="1.15" fill="#e6e6e6"/><path d="M1490.58 462.15L1487.60 472.55C1490.30 475.35 1500.10 475.35 1502.80 472.55L1499.82 462.15Z" fill="#98ffa0" stroke="#2e2e2e" stroke-width="1.1" stroke-linejoin="round"/><ellipse cx="1495.20" cy="462.15" rx="4.92" ry="2.1" fill="#363636"/><ellipse cx="1495.20" cy="461.95" rx="2.92" ry="1.15" fill="#e6e6e6"/><path d="M1516.58 462.15L1513.60 472.55C1516.30 475.35 1526.10 475.35 1528.80 472.55L1525.82 462.15Z" fill="#c0b0b0" stroke="#2e2e2e" stroke-width="1.1" stroke-linejoin="round"/><ellipse cx="1521.20" cy="462.15" rx="4.92" ry="2.1" fill="#363636"/><ellipse cx="1521.20" cy="461.95" rx="2.92" ry="1.15" fill="#e6e6e6"/><path d="M1542.58 462.15L1539.60 472.55C1542.30 475.35 1552.10 475.35 1554.80 472.55L1551.82 462.15Z" fill="#800090" stroke="#2e2e2e" stroke-width="1.1" stroke-linejoin="round"/><ellipse cx="1547.20" cy="462.15" rx="4.92" ry="2.1" fill="#363636"/><ellipse cx="1547.20" cy="461.95" rx="2.92" ry="1.15" fill="#e6e6e6"/><path d="M1568.58 462.15L1565.60 472.55C1568.30 475.35 1578.10 475.35 1580.80 472.55L1577.82 462.15Z" fill="#a00068" stroke="#2e2e2e" stroke-width="1.1" stroke-linejoin="round"/><ellipse cx="1573.20" cy="462.15" rx="4.92" ry="2.1" fill="#363636"/><ellipse cx="1573.20" cy="461.95" rx="2.92" ry="1.15" fill="#e6e6e6"/><path d="M1386.58 484.30L1383.60 494.70C1386.30 497.50 1396.10 497.50 1398.80 494.70L1395.82 484.30Z" fill="#787080" stroke="#2e2e2e" stroke-width="1.1" stroke-linejoin="round"/><ellipse cx="1391.20" cy="484.30" rx="4.92" ry="2.1" fill="#363636"/><ellipse cx="1391.20" cy="484.10" rx="2.92" ry="1.15" fill="#e6e6e6"/><path d="M1412.58 484.30L1409.60 494.70C1412.30 497.50 1422.10 497.50 1424.80 494.70L1421.82 484.30Z" fill="#600050" stroke="#2e2e2e" stroke-width="1.1" stroke-linejoin="round"/><ellipse cx="1417.20" cy="484.30" rx="4.92" ry="2.1" fill="#363636"/><ellipse cx="1417.20" cy="484.10" rx="2.92" ry="1.15" fill="#e6e6e6"/><path d="M1438.58 484.30L1435.60 494.70C1438.30 497.50 1448.10 497.50 1450.80 494.70L1447.82 484.30Z" fill="#280870" stroke="#2e2e2e" stroke-width="1.1" stroke-linejoin="round"/><ellipse cx="1443.20" cy="484.30" rx="4.92" ry="2.1" fill="#363636"/><ellipse cx="1443.20" cy="484.10" rx="2.92" ry="1.15" fill="#e6e6e6"/><path d="M1464.58 484.30L1461.60 494.70C1464.30 497.50 1474.10 497.50 1476.80 494.70L1473.82 484.30Z" fill="#589058" stroke="#2e2e2e" stroke-width="1.1" stroke-linejoin="round"/><ellipse cx="1469.20" cy="484.30" rx="4.92" ry="2.1" fill="#363636"/><ellipse cx="1469.20" cy="484.10" rx="2.92" ry="1.15" fill="#e6e6e6"/><path d="M1490.58 484.30L1487.60 494.70C1490.30 497.50 1500.10 497.50 1502.80 494.70L1499.82 484.30Z" fill="#983050" stroke="#2e2e2e" stroke-width="1.1" stroke-linejoin="round"/><ellipse cx="1495.20" cy="484.30" rx="4.92" ry="2.1" fill="#363636"/><ellipse cx="1495.20" cy="484.10" rx="2.92" ry="1.15" fill="#e6e6e6"/><path d="M1516.58 484.30L1513.60 494.70C1516.30 497.50 1526.10 497.50 1528.80 494.70L1525.82 484.30Z" fill="#c82898" stroke="#2e2e2e" stroke-width="1.1" stroke-linejoin="round"/><ellipse cx="1521.20" cy="484.30" rx="4.92" ry="2.1" fill="#363636"/><ellipse cx="1521.20" cy="484.10" rx="2.92" ry="1.15" fill="#e6e6e6"/><path d="M1542.58 484.30L1539.60 494.70C1542.30 497.50 1552.10 497.50 1554.80 494.70L1551.82 484.30Z" fill="#7070ff" stroke="#2e2e2e" stroke-width="1.1" stroke-linejoin="round"/><ellipse cx="1547.20" cy="484.30" rx="4.92" ry="2.1" fill="#363636"/><ellipse cx="1547.20" cy="484.10" rx="2.92" ry="1.15" fill="#e6e6e6"/><path d="M1568.58 484.30L1565.60 494.70C1568.30 497.50 1578.10 497.50 1580.80 494.70L1577.82 484.30Z" fill="#ff7010" stroke="#2e2e2e" stroke-width="1.1" stroke-linejoin="round"/><ellipse cx="1573.20" cy="484.30" rx="4.92" ry="2.1" fill="#363636"/><ellipse cx="1573.20" cy="484.10" rx="2.92" ry="1.15" fill="#e6e6e6"/><path d="M1386.58 506.45L1383.60 516.85C1386.30 519.65 1396.10 519.65 1398.80 516.85L1395.82 506.45Z" fill="#d8d8d8" stroke="#2e2e2e" stroke-width="1.1" stroke-linejoin="round"/><ellipse cx="1391.20" cy="506.45" rx="4.92" ry="2.1" fill="#363636"/><ellipse cx="1391.20" cy="506.25" rx="2.92" ry="1.15" fill="#e6e6e6"/><path d="M1412.58 506.45L1409.60 516.85C1412.30 519.65 1422.10 519.65 1424.80 516.85L1421.82 506.45Z" fill="#681040" stroke="#2e2e2e" stroke-width="1.1" stroke-linejoin="round"/><ellipse cx="1417.20" cy="506.45" rx="4.92" ry="2.1" fill="#363636"/><ellipse cx="1417.20" cy="506.25" rx="2.92" ry="1.15" fill="#e6e6e6"/><path d="M1438.58 506.45L1435.60 516.85C1438.30 519.65 1448.10 519.65 1450.80 516.85L1447.82 506.45Z" fill="#686880" stroke="#2e2e2e" stroke-width="1.1" stroke-linejoin="round"/><ellipse cx="1443.20" cy="506.45" rx="4.92" ry="2.1" fill="#363636"/><ellipse cx="1443.20" cy="506.25" rx="2.92" ry="1.15" fill="#e6e6e6"/><path d="M1464.58 506.45L1461.60 516.85C1464.30 519.65 1474.10 519.65 1476.80 516.85L1473.82 506.45Z" fill="#785868" stroke="#2e2e2e" stroke-width="1.1" stroke-linejoin="round"/><ellipse cx="1469.20" cy="506.45" rx="4.92" ry="2.1" fill="#363636"/><ellipse cx="1469.20" cy="506.25" rx="2.92" ry="1.15" fill="#e6e6e6"/><path d="M1490.58 506.45L1487.60 516.85C1490.30 519.65 1500.10 519.65 1502.80 516.85L1499.82 506.45Z" fill="#186818" stroke="#2e2e2e" stroke-width="1.1" stroke-linejoin="round"/><ellipse cx="1495.20" cy="506.45" rx="4.92" ry="2.1" fill="#363636"/><ellipse cx="1495.20" cy="506.25" rx="2.92" ry="1.15" fill="#e6e6e6"/><path d="M1516.58 506.45L1513.60 516.85C1516.30 519.65 1526.10 519.65 1528.80 516.85L1525.82 506.45Z" fill="#205890" stroke="#2e2e2e" stroke-width="1.1" stroke-linejoin="round"/><ellipse cx="1521.20" cy="506.45" rx="4.92" ry="2.1" fill="#363636"/><ellipse cx="1521.20" cy="506.25" rx="2.92" ry="1.15" fill="#e6e6e6"/><path d="M1542.58 506.45L1539.60 516.85C1542.30 519.65 1552.10 519.65 1554.80 516.85L1551.82 506.45Z" fill="#e8c870" stroke="#2e2e2e" stroke-width="1.1" stroke-linejoin="round"/><ellipse cx="1547.20" cy="506.45" rx="4.92" ry="2.1" fill="#363636"/><ellipse cx="1547.20" cy="506.25" rx="2.92" ry="1.15" fill="#e6e6e6"/><path d="M1568.58 506.45L1565.60 516.85C1568.30 519.65 1578.10 519.65 1580.80 516.85L1577.82 506.45Z" fill="#80b0a8" stroke="#2e2e2e" stroke-width="1.1" stroke-linejoin="round"/><ellipse cx="1573.20" cy="506.45" rx="4.92" ry="2.1" fill="#363636"/><ellipse cx="1573.20" cy="506.25" rx="2.92" ry="1.15" fill="#e6e6e6"/><path d="M1386.58 528.60L1383.60 539.00C1386.30 541.80 1396.10 541.80 1398.80 539.00L1395.82 528.60Z" fill="#f8f820" stroke="#2e2e2e" stroke-width="1.1" stroke-linejoin="round"/><ellipse cx="1391.20" cy="528.60" rx="4.92" ry="2.1" fill="#363636"/><ellipse cx="1391.20" cy="528.40" rx="2.92" ry="1.15" fill="#e6e6e6"/><path d="M1412.58 528.60L1409.60 539.00C1412.30 541.80 1422.10 541.80 1424.80 539.00L1421.82 528.60Z" fill="#585858" stroke="#2e2e2e" stroke-width="1.1" stroke-linejoin="round"/><ellipse cx="1417.20" cy="528.60" rx="4.92" ry="2.1" fill="#363636"/><ellipse cx="1417.20" cy="528.40" rx="2.92" ry="1.15" fill="#e6e6e6"/><path d="M1438.58 528.60L1435.60 539.00C1438.30 541.80 1448.10 541.80 1450.80 539.00L1447.82 528.60Z" fill="#100000" stroke="#2e2e2e" stroke-width="1.1" stroke-linejoin="round"/><ellipse cx="1443.20" cy="528.60" rx="4.92" ry="2.1" fill="#363636"/><ellipse cx="1443.20" cy="528.40" rx="2.92" ry="1.15" fill="#e6e6e6"/><path d="M1464.58 528.60L1461.60 539.00C1464.30 541.80 1474.10 541.80 1476.80 539.00L1473.82 528.60Z" fill="#5000ff" stroke="#2e2e2e" stroke-width="1.1" stroke-linejoin="round"/><ellipse cx="1469.20" cy="528.60" rx="4.92" ry="2.1" fill="#363636"/><ellipse cx="1469.20" cy="528.40" rx="2.92" ry="1.15" fill="#e6e6e6"/><path d="M1490.58 528.60L1487.60 539.00C1490.30 541.80 1500.10 541.80 1502.80 539.00L1499.82 528.60Z" fill="#00a850" stroke="#2e2e2e" stroke-width="1.1" stroke-linejoin="round"/><ellipse cx="1495.20" cy="528.60" rx="4.92" ry="2.1" fill="#363636"/><ellipse cx="1495.20" cy="528.40" rx="2.92" ry="1.15" fill="#e6e6e6"/><path d="M1516.58 528.60L1513.60 539.00C1516.30 541.80 1526.10 541.80 1528.80 539.00L1525.82 528.60Z" fill="#d0e870" stroke="#2e2e2e" stroke-width="1.1" stroke-linejoin="round"/><ellipse cx="1521.20" cy="528.60" rx="4.92" ry="2.1" fill="#363636"/><ellipse cx="1521.20" cy="528.40" rx="2.92" ry="1.15" fill="#e6e6e6"/><path d="M1542.58 528.60L1539.60 539.00C1542.30 541.80 1552.10 541.80 1554.80 539.00L1551.82 528.60Z" fill="#00c010" stroke="#2e2e2e" stroke-width="1.1" stroke-linejoin="round"/><ellipse cx="1547.20" cy="528.60" rx="4.92" ry="2.1" fill="#363636"/><ellipse cx="1547.20" cy="528.40" rx="2.92" ry="1.15" fill="#e6e6e6"/><path d="M1568.58 528.60L1565.60 539.00C1568.30 541.80 1578.10 541.80 1580.80 539.00L1577.82 528.60Z" fill="#00e890" stroke="#2e2e2e" stroke-width="1.1" stroke-linejoin="round"/><ellipse cx="1573.20" cy="528.60" rx="4.92" ry="2.1" fill="#363636"/><ellipse cx="1573.20" cy="528.40" rx="2.92" ry="1.15" fill="#e6e6e6"/><path d="M1386.58 550.75L1383.60 561.15C1386.30 563.95 1396.10 563.95 1398.80 561.15L1395.82 550.75Z" fill="#009090" stroke="#2e2e2e" stroke-width="1.1" stroke-linejoin="round"/><ellipse cx="1391.20" cy="550.75" rx="4.92" ry="2.1" fill="#363636"/><ellipse cx="1391.20" cy="550.55" rx="2.92" ry="1.15" fill="#e6e6e6"/><path d="M1412.58 550.75L1409.60 561.15C1412.30 563.95 1422.10 563.95 1424.80 561.15L1421.82 550.75Z" fill="#ff50e8" stroke="#2e2e2e" stroke-width="1.1" stroke-linejoin="round"/><ellipse cx="1417.20" cy="550.75" rx="4.92" ry="2.1" fill="#363636"/><ellipse cx="1417.20" cy="550.55" rx="2.92" ry="1.15" fill="#e6e6e6"/><path d="M1438.58 550.75L1435.60 561.15C1438.30 563.95 1448.10 563.95 1450.80 561.15L1447.82 550.75Z" fill="#00e8e8" stroke="#2e2e2e" stroke-width="1.1" stroke-linejoin="round"/><ellipse cx="1443.20" cy="550.75" rx="4.92" ry="2.1" fill="#363636"/><ellipse cx="1443.20" cy="550.55" rx="2.92" ry="1.15" fill="#e6e6e6"/><path d="M1464.58 550.75L1461.60 561.15C1464.30 563.95 1474.10 563.95 1476.80 561.15L1473.82 550.75Z" fill="#c8c010" stroke="#2e2e2e" stroke-width="1.1" stroke-linejoin="round"/><ellipse cx="1469.20" cy="550.75" rx="4.92" ry="2.1" fill="#363636"/><ellipse cx="1469.20" cy="550.55" rx="2.92" ry="1.15" fill="#e6e6e6"/><path d="M1490.58 550.75L1487.60 561.15C1490.30 563.95 1500.10 563.95 1502.80 561.15L1499.82 550.75Z" fill="#9898ff" stroke="#2e2e2e" stroke-width="1.1" stroke-linejoin="round"/><ellipse cx="1495.20" cy="550.75" rx="4.92" ry="2.1" fill="#363636"/><ellipse cx="1495.20" cy="550.55" rx="2.92" ry="1.15" fill="#e6e6e6"/><path d="M1516.58 550.75L1513.60 561.15C1516.30 563.95 1526.10 563.95 1528.80 561.15L1525.82 550.75Z" fill="#989898" stroke="#2e2e2e" stroke-width="1.1" stroke-linejoin="round"/><ellipse cx="1521.20" cy="550.75" rx="4.92" ry="2.1" fill="#363636"/><ellipse cx="1521.20" cy="550.55" rx="2.92" ry="1.15" fill="#e6e6e6"/><path d="M1542.58 550.75L1539.60 561.15C1542.30 563.95 1552.10 563.95 1554.80 561.15L1551.82 550.75Z" fill="#887810" stroke="#2e2e2e" stroke-width="1.1" stroke-linejoin="round"/><ellipse cx="1547.20" cy="550.75" rx="4.92" ry="2.1" fill="#363636"/><ellipse cx="1547.20" cy="550.55" rx="2.92" ry="1.15" fill="#e6e6e6"/><path d="M1568.58 550.75L1565.60 561.15C1568.30 563.95 1578.10 563.95 1580.80 561.15L1577.82 550.75Z" fill="#68a010" stroke="#2e2e2e" stroke-width="1.1" stroke-linejoin="round"/><ellipse cx="1573.20" cy="550.75" rx="4.92" ry="2.1" fill="#363636"/><ellipse cx="1573.20" cy="550.55" rx="2.92" ry="1.15" fill="#e6e6e6"/><path d="M1386.58 572.90L1383.60 583.30C1386.30 586.10 1396.10 586.10 1398.80 583.30L1395.82 572.90Z" fill="#807870" stroke="#2e2e2e" stroke-width="1.1" stroke-linejoin="round"/><ellipse cx="1391.20" cy="572.90" rx="4.92" ry="2.1" fill="#363636"/><ellipse cx="1391.20" cy="572.70" rx="2.92" ry="1.15" fill="#e6e6e6"/><path d="M1412.58 572.90L1409.60 583.30C1412.30 586.10 1422.10 586.10 1424.80 583.30L1421.82 572.90Z" fill="#485810" stroke="#2e2e2e" stroke-width="1.1" stroke-linejoin="round"/><ellipse cx="1417.20" cy="572.90" rx="4.92" ry="2.1" fill="#363636"/><ellipse cx="1417.20" cy="572.70" rx="2.92" ry="1.15" fill="#e6e6e6"/><path d="M1438.58 572.90L1435.60 583.30C1438.30 586.10 1448.10 586.10 1450.80 583.30L1447.82 572.90Z" fill="#803018" stroke="#2e2e2e" stroke-width="1.1" stroke-linejoin="round"/><ellipse cx="1443.20" cy="572.90" rx="4.92" ry="2.1" fill="#363636"/><ellipse cx="1443.20" cy="572.70" rx="2.92" ry="1.15" fill="#e6e6e6"/><path d="M1464.58 572.90L1461.60 583.30C1464.30 586.10 1474.10 586.10 1476.80 583.30L1473.82 572.90Z" fill="#505090" stroke="#2e2e2e" stroke-width="1.1" stroke-linejoin="round"/><ellipse cx="1469.20" cy="572.90" rx="4.92" ry="2.1" fill="#363636"/><ellipse cx="1469.20" cy="572.70" rx="2.92" ry="1.15" fill="#e6e6e6"/><path d="M1490.58 572.90L1487.60 583.30C1490.30 586.10 1500.10 586.10 1502.80 583.30L1499.82 572.90Z" fill="#409838" stroke="#2e2e2e" stroke-width="1.1" stroke-linejoin="round"/><ellipse cx="1495.20" cy="572.90" rx="4.92" ry="2.1" fill="#363636"/><ellipse cx="1495.20" cy="572.70" rx="2.92" ry="1.15" fill="#e6e6e6"/><path d="M1516.58 572.90L1513.60 583.30C1516.30 586.10 1526.10 586.10 1528.80 583.30L1525.82 572.90Z" fill="#98c828" stroke="#2e2e2e" stroke-width="1.1" stroke-linejoin="round"/><ellipse cx="1521.20" cy="572.90" rx="4.92" ry="2.1" fill="#363636"/><ellipse cx="1521.20" cy="572.70" rx="2.92" ry="1.15" fill="#e6e6e6"/><path d="M1542.58 572.90L1539.60 583.30C1542.30 586.10 1552.10 586.10 1554.80 583.30L1551.82 572.90Z" fill="#ff7070" stroke="#2e2e2e" stroke-width="1.1" stroke-linejoin="round"/><ellipse cx="1547.20" cy="572.90" rx="4.92" ry="2.1" fill="#363636"/><ellipse cx="1547.20" cy="572.70" rx="2.92" ry="1.15" fill="#e6e6e6"/><path d="M1568.58 572.90L1565.60 583.30C1568.30 586.10 1578.10 586.10 1580.80 583.30L1577.82 572.90Z" fill="#00e060" stroke="#2e2e2e" stroke-width="1.1" stroke-linejoin="round"/><ellipse cx="1573.20" cy="572.90" rx="4.92" ry="2.1" fill="#363636"/><ellipse cx="1573.20" cy="572.70" rx="2.92" ry="1.15" fill="#e6e6e6"/><path d="M1386.58 595.05L1383.60 605.45C1386.30 608.25 1396.10 608.25 1398.80 605.45L1395.82 595.05Z" fill="#d0e0e0" stroke="#2e2e2e" stroke-width="1.1" stroke-linejoin="round"/><ellipse cx="1391.20" cy="595.05" rx="4.92" ry="2.1" fill="#363636"/><ellipse cx="1391.20" cy="594.85" rx="2.92" ry="1.15" fill="#e6e6e6"/><path d="M1412.58 595.05L1409.60 605.45C1412.30 608.25 1422.10 608.25 1424.80 605.45L1421.82 595.05Z" fill="#408010" stroke="#2e2e2e" stroke-width="1.1" stroke-linejoin="round"/><ellipse cx="1417.20" cy="595.05" rx="4.92" ry="2.1" fill="#363636"/><ellipse cx="1417.20" cy="594.85" rx="2.92" ry="1.15" fill="#e6e6e6"/><path d="M1438.58 595.05L1435.60 605.45C1438.30 608.25 1448.10 608.25 1450.80 605.45L1447.82 595.05Z" fill="#888080" stroke="#2e2e2e" stroke-width="1.1" stroke-linejoin="round"/><ellipse cx="1443.20" cy="595.05" rx="4.92" ry="2.1" fill="#363636"/><ellipse cx="1443.20" cy="594.85" rx="2.92" ry="1.15" fill="#e6e6e6"/><path d="M1464.58 595.05L1461.60 605.45C1464.30 608.25 1474.10 608.25 1476.80 605.45L1473.82 595.05Z" fill="#585858" stroke="#2e2e2e" stroke-width="1.1" stroke-linejoin="round"/><ellipse cx="1469.20" cy="595.05" rx="4.92" ry="2.1" fill="#363636"/><ellipse cx="1469.20" cy="594.85" rx="2.92" ry="1.15" fill="#e6e6e6"/><path d="M1490.58 595.05L1487.60 605.45C1490.30 608.25 1500.10 608.25 1502.80 605.45L1499.82 595.05Z" fill="#000040" stroke="#2e2e2e" stroke-width="1.1" stroke-linejoin="round"/><ellipse cx="1495.20" cy="595.05" rx="4.92" ry="2.1" fill="#363636"/><ellipse cx="1495.20" cy="594.85" rx="2.92" ry="1.15" fill="#e6e6e6"/><path d="M1516.58 595.05L1513.60 605.45C1516.30 608.25 1526.10 608.25 1528.80 605.45L1525.82 595.05Z" fill="#800040" stroke="#2e2e2e" stroke-width="1.1" stroke-linejoin="round"/><ellipse cx="1521.20" cy="595.05" rx="4.92" ry="2.1" fill="#363636"/><ellipse cx="1521.20" cy="594.85" rx="2.92" ry="1.15" fill="#e6e6e6"/><path d="M1542.58 595.05L1539.60 605.45C1542.30 608.25 1552.10 608.25 1554.80 605.45L1551.82 595.05Z" fill="#90f8d8" stroke="#2e2e2e" stroke-width="1.1" stroke-linejoin="round"/><ellipse cx="1547.20" cy="595.05" rx="4.92" ry="2.1" fill="#363636"/><ellipse cx="1547.20" cy="594.85" rx="2.92" ry="1.15" fill="#e6e6e6"/><path d="M1568.58 595.05L1565.60 605.45C1568.30 608.25 1578.10 608.25 1580.80 605.45L1577.82 595.05Z" fill="#c8b8d0" stroke="#2e2e2e" stroke-width="1.1" stroke-linejoin="round"/><ellipse cx="1573.20" cy="595.05" rx="4.92" ry="2.1" fill="#363636"/><ellipse cx="1573.20" cy="594.85" rx="2.92" ry="1.15" fill="#e6e6e6"/><circle cx="1395" cy="441" r="3.9" fill="#333"/><path d="M1392.8 441L1394.5 442.8L1397.4 439.4" stroke="#fff" stroke-width="1.3" fill="none"/></svg>
<div class="t" style="left:1403.5px;top:416.8px;height:16px;line-height:16px;font-size:12px;color:#1a1a30;letter-spacing:-0.251px;">Yarn Colors</div>
<svg style="left:1613px;top:418px;" width="10" height="8"><path d="M0 8L5 4.4L10 8V3.6L5 0L0 3.6Z" fill="#adaeb3"/></svg>
<svg style="left:1613px;top:600px;" width="10" height="8"><path d="M0 0L5 3.6L10 0V4.4L5 8L0 4.4Z" fill="#adaeb3"/></svg>
<div style="left:1614px;top:426px;width:8px;height:51px;background:#adaeb3;border-radius:4px;"></div>
<svg style="left:1368px;top:624px;shape-rendering:crispEdges;" width="265" height="225" viewBox="1368 624 265 225"><rect x="1369" y="648" width="86" height="183" fill="#bebebe"/><rect x="1392.3" y="650.4" width="9.0" height="1.4" fill="#d000d0"/><rect x="1392.3" y="652.6" width="2.8" height="0.8" fill="#d000d0"/><rect x="1393.7" y="655.7" width="7.6" height="1" fill="#fff"/><rect x="1393.1" y="661.3" width="9.0" height="1" fill="#fff"/><rect x="1392.3" y="665.2" width="10.7" height="2" fill="#fff"/><rect x="1392.3" y="669.7" width="10.7" height="1.2" fill="#fff"/><rect x="1392.3" y="675.3" width="11.2" height="1" fill="#fff"/><rect x="1392.3" y="681.8" width="12.1" height="0.8" fill="#e8e8e8"/><rect x="1392.3" y="684.3" width="12.1" height="0.8" fill="#e8e8e8"/><rect x="1391.7" y="686.6" width="12.6" height="1" fill="#fff"/><rect x="1391.7" y="690.8" width="13.2" height="1" fill="#fff"/><rect x="1391.4" y="695.0" width="14.0" height="1" fill="#fff"/><rect x="1390.9" y="698.9" width="14.9" height="1" fill="#fff"/><rect x="1390.9" y="709.0" width="15.7" height="1" fill="#fff"/><rect x="1390.9" y="711.5" width="15.7" height="1" fill="#fff"/><rect x="1390.3" y="718.3" width="16.6" height="1" fill="#fff"/><rect x="1390.3" y="721.1" width="16.6" height="1" fill="#fff"/><rect x="1389.8" y="724.2" width="17.1" height="1.2" fill="#fff"/><rect x="1389.8" y="727.0" width="17.1" height="1.6" fill="#fff"/><rect x="1388.9" y="735.1" width="18.0" height="1" fill="#fff"/><rect x="1386.9" y="757.9" width="19.9" height="1.8" fill="#fff"/><rect x="1386.9" y="760.7" width="19.9" height="1.8" fill="#fff"/><rect x="1386.9" y="763.5" width="19.9" height="1" fill="#fff"/><rect x="1386.9" y="769.1" width="19.9" height="1" fill="#fff"/><rect x="1386.9" y="771.6" width="19.9" height="1" fill="#fff"/><rect x="1386.9" y="774.1" width="19.9" height="0.8" fill="#fff"/><rect x="1386.9" y="781.7" width="19.9" height="1" fill="#fff"/><rect x="1386.9" y="784.5" width="19.9" height="1.4" fill="#fff"/><rect x="1386.9" y="791.3" width="19.9" height="1.4" fill="#fff"/><rect x="1386.9" y="796.6" width="19.9" height="1" fill="#fff"/><rect x="1386.9" y="799.1" width="19.9" height="1.4" fill="#fff"/><rect x="1386.9" y="801.4" width="19.9" height="0.8" fill="#e4e4e4"/><rect x="1386.9" y="805.3" width="19.9" height="1.4" fill="#fff"/><rect x="1386.9" y="808.1" width="19.9" height="1.4" fill="#fff"/><rect x="1386.9" y="810.9" width="19.9" height="1.4" fill="#fff"/><rect x="1386.9" y="813.1" width="19.9" height="1" fill="#fff"/><rect x="1386.9" y="817.1" width="19.9" height="1.2" fill="#e0703c"/><rect x="1386.9" y="821.0" width="48.3" height="2.2" fill="#800080"/><rect x="1388.1" y="824.1" width="46.3" height="0.8" fill="#a030a0"/><rect x="1386.9" y="828.0" width="48.8" height="1" fill="#9020a0"/><rect x="1417.0" y="649.2" width="10.4" height="0.8" fill="#e8c8e8"/><rect x="1417.0" y="654.3" width="5.3" height="1" fill="#fff"/><rect x="1418.4" y="655.7" width="5.1" height="0.8" fill="#fff"/><rect x="1414.7" y="667.8" width="12.1" height="1" fill="#fff"/><rect x="1413.9" y="672.8" width="12.9" height="0.8" fill="#e8e8e8"/><rect x="1413.9" y="675.1" width="12.9" height="0.8" fill="#e8e8e8"/><rect x="1413.9" y="677.3" width="12.9" height="0.8" fill="#e8e8e8"/><rect x="1412.8" y="683.5" width="14.9" height="1" fill="#fff"/><rect x="1412.8" y="685.4" width="14.9" height="0.8" fill="#e8e8e8"/><rect x="1409.4" y="705.9" width="19.4" height="1" fill="#fff"/><rect x="1409.4" y="708.7" width="19.4" height="1" fill="#fff"/><rect x="1409.4" y="712.1" width="20.2" height="2" fill="#fff"/><rect x="1409.4" y="715.8" width="20.8" height="1.2" fill="#fff"/><rect x="1409.4" y="721.9" width="21.3" height="1" fill="#fff"/><rect x="1409.4" y="730.6" width="23.0" height="1.2" fill="#fff"/><rect x="1409.4" y="746.1" width="24.1" height="0.7" fill="#d4d4d4"/><rect x="1409.4" y="757.6" width="25.3" height="1.6" fill="#fff"/><rect x="1409.4" y="760.1" width="25.3" height="1.2" fill="#fff"/><rect x="1409.4" y="763.8" width="25.3" height="1.8" fill="#fff"/><rect x="1409.4" y="766.6" width="25.3" height="1" fill="#fff"/><rect x="1409.4" y="772.2" width="25.3" height="1.8" fill="#fff"/><rect x="1409.4" y="778.9" width="25.3" height="1" fill="#fff"/><rect x="1409.4" y="782.8" width="25.3" height="1.4" fill="#fff"/><rect x="1409.4" y="786.2" width="25.3" height="1.4" fill="#fff"/><rect x="1409.4" y="790.1" width="25.3" height="1.6" fill="#fff"/><rect x="1409.4" y="793.5" width="25.3" height="1.4" fill="#fff"/><rect x="1409.4" y="797.4" width="25.3" height="1.8" fill="#e2e2e2"/><rect x="1409.4" y="802.5" width="25.3" height="1.4" fill="#fff"/><rect x="1409.4" y="805.9" width="25.3" height="1.6" fill="#fff"/><rect x="1409.4" y="809.2" width="25.3" height="1.6" fill="#fff"/><rect x="1409.4" y="812.6" width="25.3" height="1.4" fill="#fff"/><rect x="1409.4" y="819.0" width="25.3" height="0.9" fill="#800080"/><rect x="1369" y="830.6" width="86" height="1.2" fill="#000080"/><rect x="1369.6" y="672" width="85" height="105.4" fill="none" stroke="#ee1c24" stroke-width="1.2"/><rect x="1370.6" y="673" width="83" height="103.4" fill="none" stroke="#fff" stroke-width="0.7"/></svg>
<div style="left:1369px;top:832.5px;width:113.6px;height:15.5px;background:#555555;"></div>
<div class="t" style="left:1373.5px;top:832.6px;height:16px;line-height:16px;font-size:9.6px;color:#ececec;letter-spacing:0.139px;">105 MB - 26,2 MB - 3 %</div>
</body></html>
